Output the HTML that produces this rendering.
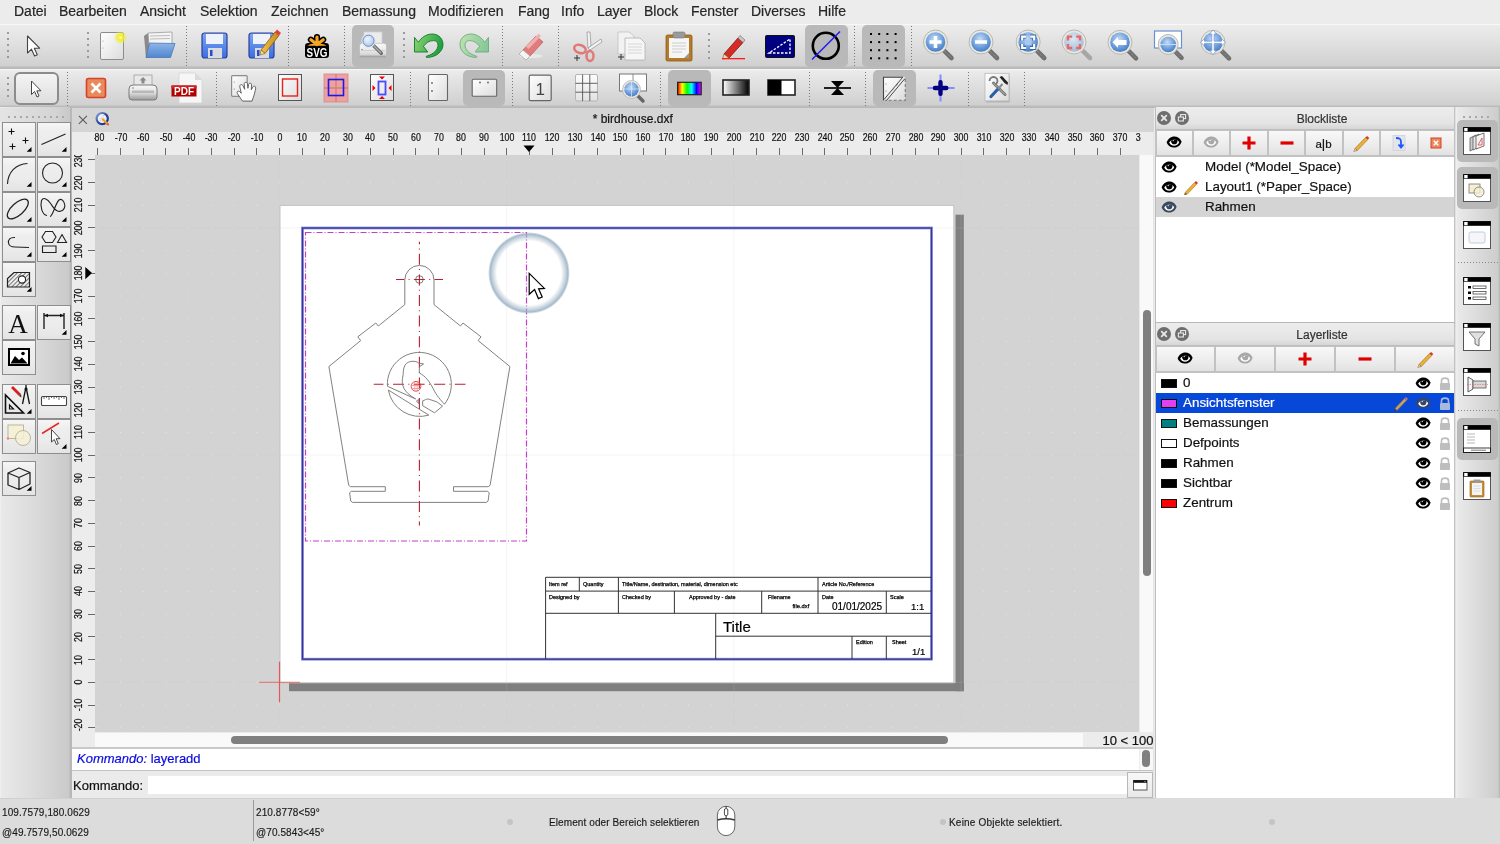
<!DOCTYPE html><html><head><meta charset="utf-8"><style>
*{margin:0;padding:0;box-sizing:border-box}
html,body{width:1500px;height:844px;overflow:hidden;background:#e4e4e4;font-family:"Liberation Sans",sans-serif;color:#000}
.a{position:absolute}
.t{white-space:nowrap;line-height:1;-webkit-text-stroke-width:0.2px}
svg{overflow:visible}
</style></head><body><div id="root" class="a" style="left:0;top:0;width:1500px;height:844px;overflow:hidden;will-change:transform"><div class="a" style="left:0;top:0;width:1500px;height:24px;background:#ececec"></div><div class="a t" style="left:14px;top:4.15px;font-size:14px;color:#262626;">Datei</div><div class="a t" style="left:59px;top:4.15px;font-size:14px;color:#262626;">Bearbeiten</div><div class="a t" style="left:140px;top:4.15px;font-size:14px;color:#262626;">Ansicht</div><div class="a t" style="left:200px;top:4.15px;font-size:14px;color:#262626;">Selektion</div><div class="a t" style="left:271px;top:4.15px;font-size:14px;color:#262626;">Zeichnen</div><div class="a t" style="left:342px;top:4.15px;font-size:14px;color:#262626;">Bemassung</div><div class="a t" style="left:428px;top:4.15px;font-size:14px;color:#262626;">Modifizieren</div><div class="a t" style="left:518px;top:4.15px;font-size:14px;color:#262626;">Fang</div><div class="a t" style="left:561px;top:4.15px;font-size:14px;color:#262626;">Info</div><div class="a t" style="left:597px;top:4.15px;font-size:14px;color:#262626;">Layer</div><div class="a t" style="left:644px;top:4.15px;font-size:14px;color:#262626;">Block</div><div class="a t" style="left:691px;top:4.15px;font-size:14px;color:#262626;">Fenster</div><div class="a t" style="left:751px;top:4.15px;font-size:14px;color:#262626;">Diverses</div><div class="a t" style="left:818px;top:4.15px;font-size:14px;color:#262626;">Hilfe</div><div class="a" style="left:0;top:24px;width:1500px;height:45px;background:linear-gradient(#f8f8f8 0,#f8f8f8 1px,#ececec 1px,#e4e4e4 14px,#d0d0d0 42px,#bcbcbc 43px,#b8b8b8 45px)"></div><div class="a" style="left:0;top:69px;width:1500px;height:39px;background:linear-gradient(#f8f8f8 0,#f8f8f8 1px,#ececec 1px,#e4e4e4 10px,#d0d0d0 36px,#bcbcbc 37px,#b8b8b8 39px)"></div><svg width="0" height="0" style="position:absolute"><defs>
<radialGradient id="lensB" cx="0.45" cy="0.35" r="0.7"><stop offset="0" stop-color="#c6dcf5"/><stop offset="0.6" stop-color="#6d9fdc"/><stop offset="1" stop-color="#3f74c0"/></radialGradient>
<radialGradient id="lensG" cx="0.45" cy="0.35" r="0.7"><stop offset="0" stop-color="#dde8f3"/><stop offset="1" stop-color="#9fb8d6"/></radialGradient>
<linearGradient id="pageG" x1="0" y1="0" x2="1" y2="1"><stop offset="0" stop-color="#ffffff"/><stop offset="1" stop-color="#dcdcdc"/></linearGradient>
<linearGradient id="floppy" x1="0" y1="0" x2="0" y2="1"><stop offset="0" stop-color="#7fa6f0"/><stop offset="1" stop-color="#3a6ee0"/></linearGradient>
<linearGradient id="folder" x1="0" y1="0" x2="0" y2="1"><stop offset="0" stop-color="#8fb5e8"/><stop offset="1" stop-color="#4f86cf"/></linearGradient>
<linearGradient id="btnG" x1="0" y1="0" x2="0" y2="1"><stop offset="0" stop-color="#fdfdfd"/><stop offset="1" stop-color="#e2e2e2"/></linearGradient>
<linearGradient id="rainbow" x1="0" y1="0" x2="1" y2="0"><stop offset="0" stop-color="#ff0000"/><stop offset="0.2" stop-color="#ffff00"/><stop offset="0.4" stop-color="#00ff00"/><stop offset="0.6" stop-color="#00ffff"/><stop offset="0.8" stop-color="#0000ff"/><stop offset="1" stop-color="#ff00ff"/></linearGradient>
<linearGradient id="gradBW" x1="0" y1="0" x2="1" y2="0"><stop offset="0" stop-color="#ffffff"/><stop offset="1" stop-color="#000000"/></linearGradient>
<linearGradient id="pencilG" x1="0" y1="0" x2="1" y2="0"><stop offset="0" stop-color="#f5c04a"/><stop offset="1" stop-color="#c88a1c"/></linearGradient>
</defs></svg><div class="a" style="left:7px;top:32px;width:2px;height:2px;background:#9a9a9a"></div><div class="a" style="left:7px;top:38px;width:2px;height:2px;background:#9a9a9a"></div><div class="a" style="left:7px;top:44px;width:2px;height:2px;background:#9a9a9a"></div><div class="a" style="left:7px;top:50px;width:2px;height:2px;background:#9a9a9a"></div><div class="a" style="left:7px;top:56px;width:2px;height:2px;background:#9a9a9a"></div><div class="a" style="left:87px;top:32px;width:2px;height:2px;background:#9a9a9a"></div><div class="a" style="left:87px;top:38px;width:2px;height:2px;background:#9a9a9a"></div><div class="a" style="left:87px;top:44px;width:2px;height:2px;background:#9a9a9a"></div><div class="a" style="left:87px;top:50px;width:2px;height:2px;background:#9a9a9a"></div><div class="a" style="left:87px;top:56px;width:2px;height:2px;background:#9a9a9a"></div><div class="a" style="left:403px;top:32px;width:2px;height:2px;background:#9a9a9a"></div><div class="a" style="left:403px;top:38px;width:2px;height:2px;background:#9a9a9a"></div><div class="a" style="left:403px;top:44px;width:2px;height:2px;background:#9a9a9a"></div><div class="a" style="left:403px;top:50px;width:2px;height:2px;background:#9a9a9a"></div><div class="a" style="left:403px;top:56px;width:2px;height:2px;background:#9a9a9a"></div><div class="a" style="left:708px;top:33px;width:2px;height:2px;background:#9a9a9a"></div><div class="a" style="left:708px;top:39px;width:2px;height:2px;background:#9a9a9a"></div><div class="a" style="left:708px;top:45px;width:2px;height:2px;background:#9a9a9a"></div><div class="a" style="left:708px;top:51px;width:2px;height:2px;background:#9a9a9a"></div><div class="a" style="left:708px;top:57px;width:2px;height:2px;background:#9a9a9a"></div><div class="a" style="left:186px;top:26px;width:1px;height:41px;background:repeating-linear-gradient(180deg,#7a7a7a 0 1px,transparent 1px 3px)"></div><div class="a" style="left:288px;top:26px;width:1px;height:41px;background:repeating-linear-gradient(180deg,#7a7a7a 0 1px,transparent 1px 3px)"></div><div class="a" style="left:344px;top:26px;width:1px;height:41px;background:repeating-linear-gradient(180deg,#7a7a7a 0 1px,transparent 1px 3px)"></div><div class="a" style="left:502px;top:26px;width:1px;height:41px;background:repeating-linear-gradient(180deg,#7a7a7a 0 1px,transparent 1px 3px)"></div><div class="a" style="left:558px;top:26px;width:1px;height:41px;background:repeating-linear-gradient(180deg,#7a7a7a 0 1px,transparent 1px 3px)"></div><div class="a" style="left:854px;top:26px;width:1px;height:41px;background:repeating-linear-gradient(180deg,#7a7a7a 0 1px,transparent 1px 3px)"></div><div class="a" style="left:911px;top:26px;width:1px;height:41px;background:repeating-linear-gradient(180deg,#7a7a7a 0 1px,transparent 1px 3px)"></div><svg class="a" style="left:26px;top:35px" width="16" height="24" viewBox="0 0 16 24" ><path d="M1.5,1 L1.5,18 L5.5,14.2 L8.6,21 L11.3,19.8 L8.3,13.2 L13.6,13.2 Z" fill="#fff" stroke="#444" stroke-width="1.1" stroke-linejoin="round"/></svg><svg class="a" style="left:98px;top:30px" width="30" height="32" viewBox="0 0 30 32" ><defs><radialGradient id="glow"><stop offset="0" stop-color="#ffffc0"/><stop offset="0.35" stop-color="#f4f020"/><stop offset="0.7" stop-color="#f0ec40" stop-opacity="0.5"/><stop offset="1" stop-color="#f0f060" stop-opacity="0"/></radialGradient></defs><rect x="2.5" y="2.5" width="23" height="27" rx="1.5" fill="url(#pageG)" stroke="#8c8c8c" stroke-width="1"/><circle cx="5" cy="11" r="0.6" fill="#999"/><circle cx="5" cy="18" r="0.6" fill="#999"/><circle cx="22.5" cy="7.5" r="7" fill="url(#glow)"/></svg><svg class="a" style="left:142px;top:30px" width="36" height="32" viewBox="0 0 36 32" ><path d="M2,6 L6,3 L15,3 L15,26 L4,28 Z" fill="#8a8a8a"/><path d="M6,3 L30,2 L30,20 L8,26 Z" fill="#f4f4f4" stroke="#9a9a9a" stroke-width="0.8"/><path d="M8,6 L28,5.5 M8,9 L28,8.5" stroke="#bbb" stroke-width="1"/><path d="M4,27.5 L7.5,13 L33,13.5 L28.5,27.5 Z" fill="url(#folder)" stroke="#4a78b8" stroke-width="0.8"/></svg><svg class="a" style="left:201px;top:32px" width="27" height="27" viewBox="0 0 27 27" ><rect x="1" y="1" width="25" height="25" rx="2.5" fill="url(#floppy)" stroke="#2c3f9c" stroke-width="1.2"/><rect x="5" y="2" width="17" height="10" fill="#eef3fb"/><rect x="7" y="16" width="14" height="10" fill="#d8dbe0"/><rect x="9" y="18" width="2.5" height="6" fill="#2c4cc0"/></svg><svg class="a" style="left:248px;top:32px" width="27" height="27" viewBox="0 0 27 27" ><rect x="1" y="1" width="25" height="25" rx="2.5" fill="url(#floppy)" stroke="#2c3f9c" stroke-width="1.2"/><rect x="5" y="2" width="17" height="10" fill="#eef3fb"/><rect x="7" y="16" width="14" height="10" fill="#d8dbe0"/><rect x="9" y="18" width="2.5" height="6" fill="#2c4cc0"/></svg><svg class="a" style="left:258px;top:26px" width="22" height="30" viewBox="0 0 22 30" ><path d="M3,24 L17,6 L21,9.5 L7,27.5 Z" fill="url(#pencilG)" stroke="#8a5a10" stroke-width="0.8"/><path d="M17,6 L19,3.5 L23,7 L21,9.5 Z" fill="#e0403a"/><path d="M3,24 L2,29 L7,27.5 Z" fill="#f2d9a8" stroke="#8a5a10" stroke-width="0.6"/></svg><svg class="a" style="left:304px;top:32px" width="28" height="28" viewBox="0 0 28 28" ><path d="M13,12.5 L6.9,7.7 M13,12.5 L13,5.1 M13,12.5 L19.2,7.7" stroke="#000" stroke-width="6.2" stroke-linecap="round"/><rect x="1" y="11" width="24" height="15" rx="3.2" fill="#000"/><path d="M13,12.5 L6.9,7.7 M13,12.5 L13,5.1 M13,12.5 L19.2,7.7" stroke="#f5a623" stroke-width="3.2" stroke-linecap="round"/><path d="M3.5,13.8 Q6,11.2 13,12 Q20,11.2 22.5,13.8 Z" fill="#f5a623"/><text x="0" y="0" font-family="Liberation Sans" font-weight="bold" font-size="11.5" fill="#fff" text-anchor="middle" transform="translate(13,25) scale(0.86,1.12)">SVG</text></svg><div class="a" style="left:352px;top:25px;width:42px;height:42px;background:#b9b9b9;border-radius:5px"></div><svg class="a" style="left:352px;top:25px" width="43" height="42" viewBox="0 0 43 42" ><defs><linearGradient id="pbody" x1="0" y1="0" x2="0" y2="1"><stop offset="0" stop-color="#fbfbfb"/><stop offset="0.55" stop-color="#e6e6e6"/><stop offset="0.8" stop-color="#d6d6d6"/><stop offset="1" stop-color="#8a8a8a"/></linearGradient><radialGradient id="plens" cx="0.4" cy="0.35" r="0.75"><stop offset="0" stop-color="#eef4fb"/><stop offset="1" stop-color="#a9c4e4"/></radialGradient></defs><rect x="12" y="7" width="18" height="13" fill="#ececec" stroke="#cfcfcf" stroke-width="0.8"/><path d="M7.5,21 Q7.5,18.3 10.5,18.3 L31.5,18.3 Q34.5,18.3 34.5,21 L34.5,30.5 Q34.5,32.5 32.5,32.5 L9.5,32.5 Q7.5,32.5 7.5,30.5 Z" fill="url(#pbody)" stroke="#b8b8b8" stroke-width="0.7"/><path d="M9,25.5 L33,25.5" stroke="#c8c8c8" stroke-width="0.8"/><circle cx="10" cy="24.5" r="0.6" fill="#555"/><line x1="21.5" y1="20.5" x2="29.3" y2="28.3" stroke="#6a6a6a" stroke-width="3.4" stroke-linecap="round"/><line x1="21.5" y1="20.5" x2="29" y2="28" stroke="#b0b0b0" stroke-width="1.2"/><circle cx="16.5" cy="15.7" r="6.9" fill="#f4f4f4" stroke="#d8d8d8" stroke-width="0.5"/><circle cx="16.5" cy="15.7" r="5.6" fill="url(#plens)" stroke="#4a80d0" stroke-width="0.9"/></svg><svg class="a" style="left:412px;top:32px" width="34" height="28" viewBox="0 0 34 28" ><defs><linearGradient id="ugr" x1="0" y1="0" x2="1" y2="0.3"><stop offset="0" stop-color="#90d470"/><stop offset="1" stop-color="#22a040"/></linearGradient><linearGradient id="rgr" x1="1" y1="0" x2="0" y2="0.3"><stop offset="0" stop-color="#c0e4b0"/><stop offset="1" stop-color="#88c898"/></linearGradient></defs><path d="M2.5,5.4 L6.3,10.2 C9,6 14,2 20,2 C27,2 31,7 31,12.5 C31,19 25,25 15.2,25.5 C13.5,25.6 13.6,24.2 15.5,23.8 C22,22 26,17.5 26,13 C26,10 24,8.6 21.5,8.6 C17,8.6 14,11 11.4,14.3 L15.8,20 L2.5,20 Z" fill="url(#ugr)" stroke="#0e7a2e" stroke-width="0.9" stroke-linejoin="round"/></svg><svg class="a" style="left:457px;top:32px" width="34" height="28" viewBox="0 0 34 28" ><g transform="translate(34,0) scale(-1,1)"><path d="M2.5,5.4 L6.3,10.2 C9,6 14,2 20,2 C27,2 31,7 31,12.5 C31,19 25,25 15.2,25.5 C13.5,25.6 13.6,24.2 15.5,23.8 C22,22 26,17.5 26,13 C26,10 24,8.6 21.5,8.6 C17,8.6 14,11 11.4,14.3 L15.8,20 L2.5,20 Z" fill="url(#rgr)" stroke="#6aaa80" stroke-width="0.9" stroke-linejoin="round"/></g></svg><svg class="a" style="left:516px;top:32px" width="32" height="28" viewBox="0 0 32 28" ><ellipse cx="15" cy="24" rx="12" ry="2" fill="#e8e8e8"/><path d="M7,18 L20,4 L27,10 L14,24 Z" fill="#e07c7c" stroke="#c06060" stroke-width="0.8"/><path d="M10,14.5 L22.5,1.7 L25,4 L12.5,17 Z" fill="#f0b0b0"/><path d="M3,22 L7,18 L14,24 L10,28 Z" fill="#f5f5f5" stroke="#aaa" stroke-width="0.8"/></svg><svg class="a" style="left:571px;top:30px" width="34" height="32" viewBox="0 0 34 32" ><path d="M17,18 L16,2 L19,2 L20,16 Z" fill="#f4f4f4" stroke="#999" stroke-width="0.8"/><path d="M17,18 L30,9 L31,12 L19,20 Z" fill="#f4f4f4" stroke="#999" stroke-width="0.8"/><ellipse cx="9" cy="19" rx="6" ry="4" fill="none" stroke="#e07a7a" stroke-width="2.5" transform="rotate(20 9 19)"/><ellipse cx="19" cy="26" rx="3.5" ry="5" fill="none" stroke="#e07a7a" stroke-width="2.5"/><path d="M3,28 L9,28 M6,25 L6,31" stroke="#333" stroke-width="1"/></svg><svg class="a" style="left:615px;top:30px" width="36" height="32" viewBox="0 0 36 32" ><path d="M3,2 L14,2 L19,6 L19,24 L3,24 Z" fill="#f2f2f2" stroke="#c0c0c0" stroke-width="0.8"/><path d="M10,8 L25,8 L30,13 L30,30 L10,30 Z" fill="#f6f6f6" stroke="#b0b0b0" stroke-width="0.8"/><path d="M13,14 L27,14 M13,17 L27,17 M13,20 L27,20 M13,23 L27,23" stroke="#cfcfcf" stroke-width="0.8"/><path d="M3,27 L9,27 M6,24 L6,30" stroke="#333" stroke-width="1"/></svg><svg class="a" style="left:663px;top:30px" width="32" height="32" viewBox="0 0 32 32" ><rect x="3" y="5" width="26" height="26" rx="1.5" fill="#b57a2a" stroke="#8a5a18" stroke-width="0.8"/><rect x="6" y="8" width="20" height="20" fill="#f6f6f6"/><path d="M9,13 L23,13 M9,16 L23,16 M9,19 L23,19 M9,22 L19,22" stroke="#c8c8c8" stroke-width="0.9"/><path d="M21,28 L26,23 L26,28 Z" fill="#999"/><rect x="10" y="2" width="12" height="6" rx="1.5" fill="#9a9a9a" stroke="#777" stroke-width="0.6"/></svg><svg class="a" style="left:720px;top:32px" width="28" height="28" viewBox="0 0 28 28" ><path d="M4,22 L18,6 L23,10.5 L9,26 Z" fill="#d82a24" stroke="#7a1a10" stroke-width="0.8"/><path d="M18,6 L20,3.5 L25,8 L23,10.5 Z" fill="#c8c8c8" stroke="#666" stroke-width="0.6"/><path d="M4,22 L2.5,27 L9,26 Z" fill="#f2d9a8" stroke="#7a5010" stroke-width="0.6"/><rect x="2" y="26" width="23" height="1.3" fill="#ff1a1a"/></svg><svg class="a" style="left:765px;top:35px" width="30" height="23" viewBox="0 0 30 23" ><rect x="0.5" y="0.5" width="29" height="22" rx="1" fill="#000080" stroke="#111" stroke-width="1"/><path d="M4,18 L25,18 L25,4 Z" fill="none" stroke="#fff" stroke-width="1.3" stroke-dasharray="2.5,1.5"/></svg><div class="a" style="left:805px;top:25px;width:43px;height:42px;background:#b9b9b9;border-radius:5px"></div><svg class="a" style="left:810px;top:30px" width="32" height="32" viewBox="0 0 32 32" ><circle cx="15.8" cy="15.8" r="13" fill="none" stroke="#000" stroke-width="2.6"/><line x1="2" y1="29.5" x2="30" y2="1.5" stroke="#1a1aff" stroke-width="1.4"/></svg><div class="a" style="left:862px;top:25px;width:43px;height:42px;background:#b9b9b9;border-radius:5px"></div><svg class="a" style="left:870px;top:33px" width="30" height="30" viewBox="0 0 30 30" ><rect x="0.0" y="0.0" width="2" height="2" fill="#000"/><rect x="0.0" y="8.1" width="2" height="2" fill="#000"/><rect x="0.0" y="16.2" width="2" height="2" fill="#000"/><rect x="0.0" y="24.3" width="2" height="2" fill="#000"/><rect x="8.2" y="0.0" width="2" height="2" fill="#000"/><rect x="8.2" y="8.1" width="2" height="2" fill="#000"/><rect x="8.2" y="16.2" width="2" height="2" fill="#000"/><rect x="8.2" y="24.3" width="2" height="2" fill="#000"/><rect x="16.4" y="0.0" width="2" height="2" fill="#000"/><rect x="16.4" y="8.1" width="2" height="2" fill="#000"/><rect x="16.4" y="16.2" width="2" height="2" fill="#000"/><rect x="16.4" y="24.3" width="2" height="2" fill="#000"/><rect x="24.6" y="0.0" width="2" height="2" fill="#000"/><rect x="24.6" y="8.1" width="2" height="2" fill="#000"/><rect x="24.6" y="16.2" width="2" height="2" fill="#000"/><rect x="24.6" y="24.3" width="2" height="2" fill="#000"/></svg><svg class="a" style="left:918px;top:28px" width="44" height="36" viewBox="0 0 44 36" ><line x1="26.1" y1="22.6" x2="33.5" y2="30.0" stroke="#707070" stroke-width="4.6" stroke-linecap="round"/><line x1="26.5" y1="23.0" x2="33.1" y2="29.6" stroke="#9a9a9a" stroke-width="1" stroke-dasharray="1,1"/><circle cx="17.5" cy="14" r="12" fill="#e8e8e0" stroke="#b8b8b0" stroke-width="1"/><circle cx="17.5" cy="14" r="9.8" fill="url(#lensB)"/><path d="M17.5,8 L17.5,20 M11.5,14 L23.5,14" stroke="#fff" stroke-width="3.5"/></svg><svg class="a" style="left:963px;top:28px" width="44" height="36" viewBox="0 0 44 36" ><line x1="26.6" y1="22.6" x2="34.0" y2="30.0" stroke="#707070" stroke-width="4.6" stroke-linecap="round"/><line x1="27.0" y1="23.0" x2="33.6" y2="29.6" stroke="#9a9a9a" stroke-width="1" stroke-dasharray="1,1"/><circle cx="18" cy="14" r="12" fill="#e8e8e0" stroke="#b8b8b0" stroke-width="1"/><circle cx="18" cy="14" r="9.8" fill="url(#lensB)"/><path d="M12,14 L24,14" stroke="#fff" stroke-width="3.5"/></svg><svg class="a" style="left:1010px;top:28px" width="44" height="36" viewBox="0 0 44 36" ><line x1="26.8" y1="22.6" x2="34.2" y2="30.0" stroke="#707070" stroke-width="4.6" stroke-linecap="round"/><line x1="27.2" y1="23.0" x2="33.8" y2="29.6" stroke="#9a9a9a" stroke-width="1" stroke-dasharray="1,1"/><circle cx="18.2" cy="14" r="12" fill="#e8e8e0" stroke="#b8b8b0" stroke-width="1"/><circle cx="18.2" cy="14" r="9.8" fill="url(#lensB)"/><rect x="15" y="11.5" width="6.5" height="5.5" fill="#a8c8ee"/><path d="M12.2,12.6 L12.2,8.6 L16.2,8.6 M20.2,8.6 L24.2,8.6 L24.2,12.6 M24.2,16 L24.2,20 L20.2,20 M16.2,20 L12.2,20 L12.2,16" fill="none" stroke="#3566b0" stroke-width="4"/><path d="M12.2,12.6 L12.2,8.6 L16.2,8.6 M20.2,8.6 L24.2,8.6 L24.2,12.6 M24.2,16 L24.2,20 L20.2,20 M16.2,20 L12.2,20 L12.2,16" fill="none" stroke="#fff" stroke-width="2.2"/></svg><svg class="a" style="left:1056px;top:28px" width="44" height="36" viewBox="0 0 44 36" ><line x1="26.6" y1="22.6" x2="34.0" y2="30.0" stroke="#a8a8a8" stroke-width="4.6" stroke-linecap="round"/><line x1="27.0" y1="23.0" x2="33.6" y2="29.6" stroke="#9a9a9a" stroke-width="1" stroke-dasharray="1,1"/><circle cx="18" cy="14" r="12" fill="#e8e8e0" stroke="#b8b8b0" stroke-width="1"/><circle cx="18" cy="14" r="9.8" fill="url(#lensG)"/><path d="M12,12.6 L12,8.6 L16.2,8.6 M20.2,8.6 L24,8.6 L24,12.6 M24,16 L24,20 L20.2,20 M16.2,20 L12,20 L12,16" fill="none" stroke="#e86868" stroke-width="2.4"/></svg><svg class="a" style="left:1102px;top:28px" width="44" height="36" viewBox="0 0 44 36" ><line x1="26.6" y1="22.9" x2="34.0" y2="30.3" stroke="#707070" stroke-width="4.6" stroke-linecap="round"/><line x1="27.0" y1="23.3" x2="33.6" y2="29.9" stroke="#9a9a9a" stroke-width="1" stroke-dasharray="1,1"/><circle cx="18" cy="14.3" r="12" fill="#e8e8e0" stroke="#b8b8b0" stroke-width="1"/><circle cx="18" cy="14.3" r="9.8" fill="url(#lensB)"/><path d="M10.5,14.3 L16,9 L16,12 L24.5,12 L24.5,17 L16,17 L16,19.8 Z" fill="#fff"/></svg><svg class="a" style="left:1150px;top:28px" width="44" height="36" viewBox="0 0 44 36" ><rect x="4.5" y="3" width="27" height="17" fill="#fff" stroke="#6a90d0" stroke-width="1.2"/><line x1="25.4" y1="23.7" x2="31.5" y2="29.8" stroke="#707070" stroke-width="4.6" stroke-linecap="round"/><line x1="25.7" y1="24.0" x2="31.2" y2="29.5" stroke="#9a9a9a" stroke-width="1" stroke-dasharray="1,1"/><circle cx="18.2" cy="16.5" r="10" fill="#e8e8e0" stroke="#b8b8b0" stroke-width="1"/><circle cx="18.2" cy="16.5" r="7.8" fill="url(#lensB)"/><rect x="10" y="16" width="16" height="1" fill="#c8dcf4"/></svg><svg class="a" style="left:1196px;top:26px" width="44" height="38" viewBox="0 0 44 38" ><line x1="25.6" y1="24.9" x2="33.0" y2="32.3" stroke="#707070" stroke-width="4.6" stroke-linecap="round"/><line x1="26.0" y1="25.3" x2="32.6" y2="31.9" stroke="#9a9a9a" stroke-width="1" stroke-dasharray="1,1"/><circle cx="17" cy="16.3" r="12" fill="#e8e8e0" stroke="#b8b8b0" stroke-width="1"/><circle cx="17" cy="16.3" r="9.8" fill="url(#lensB)"/><path d="M17,4 L13.5,8 L15.8,8 L15.8,15.2 L8.5,15.2 L8.5,12.8 L4.5,16.3 L8.5,19.8 L8.5,17.4 L15.8,17.4 L15.8,24.6 L13.5,24.6 L17,28.6 L20.5,24.6 L18.2,24.6 L18.2,17.4 L25.5,17.4 L25.5,19.8 L29.5,16.3 L25.5,12.8 L25.5,15.2 L18.2,15.2 L18.2,8 L20.5,8 Z" fill="#fff" stroke="#6a90d0" stroke-width="0.7"/></svg><div class="a" style="left:7px;top:77px;width:2px;height:2px;background:#9a9a9a"></div><div class="a" style="left:7px;top:83px;width:2px;height:2px;background:#9a9a9a"></div><div class="a" style="left:7px;top:89px;width:2px;height:2px;background:#9a9a9a"></div><div class="a" style="left:7px;top:95px;width:2px;height:2px;background:#9a9a9a"></div><div class="a" style="left:67px;top:72px;width:1px;height:34px;background:repeating-linear-gradient(180deg,#7a7a7a 0 1px,transparent 1px 3px)"></div><div class="a" style="left:216px;top:72px;width:1px;height:34px;background:repeating-linear-gradient(180deg,#7a7a7a 0 1px,transparent 1px 3px)"></div><div class="a" style="left:410px;top:72px;width:1px;height:34px;background:repeating-linear-gradient(180deg,#7a7a7a 0 1px,transparent 1px 3px)"></div><div class="a" style="left:512px;top:72px;width:1px;height:34px;background:repeating-linear-gradient(180deg,#7a7a7a 0 1px,transparent 1px 3px)"></div><div class="a" style="left:660px;top:72px;width:1px;height:34px;background:repeating-linear-gradient(180deg,#7a7a7a 0 1px,transparent 1px 3px)"></div><div class="a" style="left:809px;top:72px;width:1px;height:34px;background:repeating-linear-gradient(180deg,#7a7a7a 0 1px,transparent 1px 3px)"></div><div class="a" style="left:865px;top:72px;width:1px;height:34px;background:repeating-linear-gradient(180deg,#7a7a7a 0 1px,transparent 1px 3px)"></div><div class="a" style="left:968px;top:72px;width:1px;height:34px;background:repeating-linear-gradient(180deg,#7a7a7a 0 1px,transparent 1px 3px)"></div><div class="a" style="left:1024px;top:72px;width:1px;height:34px;background:repeating-linear-gradient(180deg,#7a7a7a 0 1px,transparent 1px 3px)"></div><div class="a" style="left:14px;top:72px;width:45px;height:33px;border:2px solid #8c8c8c;border-radius:6px;background:linear-gradient(#f4f4f4,#dedede)"></div><svg class="a" style="left:30px;top:80px" width="14" height="20" viewBox="0 0 14 20" ><path d="M1.5,1 L1.5,14.5 L4.6,11.5 L7,17 L9,16 L6.8,10.8 L11,10.8 Z" fill="#fff" stroke="#444" stroke-width="1" stroke-linejoin="round"/></svg><svg class="a" style="left:85px;top:77px" width="22" height="22" viewBox="0 0 22 22" ><rect x="1.5" y="1.5" width="19" height="19" rx="2" fill="#e88a5c" stroke="#d8402a" stroke-width="1.6"/><path d="M6.5,6.5 L15.5,15.5 M15.5,6.5 L6.5,15.5" stroke="#fff" stroke-width="2.6"/></svg><svg class="a" style="left:128px;top:74px" width="30" height="28" viewBox="0 0 30 28" ><defs><linearGradient id="prn" x1="0" y1="0" x2="0" y2="1"><stop offset="0" stop-color="#fafafa"/><stop offset="0.5" stop-color="#e0e0e0"/><stop offset="1" stop-color="#9a9a9a"/></linearGradient></defs><rect x="6" y="1" width="18" height="11" fill="#e8e8e8" stroke="#a0a0a0" stroke-width="0.8"/><path d="M15,3 L11.5,6.5 L13.5,6.5 L13.5,9.5 L16.5,9.5 L16.5,6.5 L18.5,6.5 Z" fill="#8a8a8a"/><path d="M1,15 Q1,11 5,11 L25,11 Q29,11 29,15 L29,23 Q29,26 26,26 L4,26 Q1,26 1,23 Z" fill="url(#prn)" stroke="#7a7a7a" stroke-width="1"/><rect x="4" y="16.5" width="22" height="2.5" fill="#b8b8b8"/><circle cx="5" cy="14" r="0.7" fill="#666"/></svg><svg class="a" style="left:171px;top:72px" width="33" height="32" viewBox="0 0 33 32" ><path d="M8,1 L24,1 L31,8 L31,31 L8,31 Z" fill="#f6f6f6" stroke="#d4d4d4" stroke-width="0.8"/><path d="M24,1 L24,8 L31,8 Z" fill="#dadada"/><rect x="0.5" y="13.5" width="25" height="11" fill="#b00000"/><rect x="0.5" y="13.5" width="25" height="3" fill="#d02020"/><text x="13" y="22.5" font-family="Liberation Sans" font-weight="bold" font-size="10" fill="#fff" text-anchor="middle">PDF</text></svg><svg class="a" style="left:230px;top:74px" width="28" height="28" viewBox="0 0 28 28" ><rect x="1.6" y="1.6" width="15.6" height="20.7" rx="1" fill="url(#pageG)" stroke="#8c8c8c" stroke-width="1.2"/><circle cx="4.3" cy="8" r="0.6" fill="#777"/><circle cx="4.3" cy="15" r="0.6" fill="#777"/><path d="M8,26.8 C6,24 4,21 2.8,19 C2,17.5 3.5,16.3 5,17.2 L6.8,19 L5.3,12.5 C5,10 7.8,9.5 8.5,11.5 L10.2,15 L9.7,9.5 C9.6,7.6 12.6,7.4 13,9.5 L13.4,14 L14.2,10 C14.6,8.2 17.2,8.6 17,10.5 L16.8,15.5 L18.3,12.8 C19,11.2 21.5,11.8 21.2,13.8 C20.8,17 19.5,21 18.8,23 L17.5,26.8 Z" fill="#fff" stroke="#555" stroke-width="0.9" stroke-linejoin="round" transform="translate(4.5,0.3)"/></svg><svg class="a" style="left:277px;top:73px" width="27" height="30" viewBox="0 0 27 30" ><rect x="1.5" y="1.5" width="23" height="26" fill="url(#pageG)" stroke="#555" stroke-width="1"/><rect x="5.5" y="6" width="15" height="17" fill="none" stroke="#e82020" stroke-width="1.4"/></svg><svg class="a" style="left:323px;top:73px" width="27" height="30" viewBox="0 0 27 30" ><rect x="1" y="1" width="24" height="28" fill="#f0a0a0" stroke="#d08888" stroke-width="0.8"/><path d="M13,1 L13,29 M1,15 L25,15" stroke="#d08080" stroke-width="1.3"/><rect x="5.5" y="6.5" width="15" height="16" fill="none" stroke="#1a1ae8" stroke-width="1.6"/></svg><svg class="a" style="left:369px;top:73px" width="27" height="30" viewBox="0 0 27 30" ><rect x="1.5" y="1.5" width="23" height="26" fill="url(#pageG)" stroke="#555" stroke-width="1"/><rect x="9.5" y="8.5" width="7" height="13" fill="none" stroke="#4a4aff" stroke-width="1.8"/><path d="M10,3.5 L16,3.5 L13,6.5 Z M10,26 L16,26 L13,23 Z M3.5,12 L3.5,18 L6.5,15 Z M22.5,12 L22.5,18 L19.5,15 Z" fill="#ee0000"/></svg><svg class="a" style="left:427px;top:73px" width="23" height="30" viewBox="0 0 23 30" ><rect x="1.5" y="1.5" width="19" height="26" rx="1" fill="url(#pageG)" stroke="#666" stroke-width="1.1"/><circle cx="5" cy="10" r="0.9" fill="#666"/><circle cx="5" cy="18" r="0.9" fill="#666"/></svg><div class="a" style="left:463px;top:70px;width:42px;height:36px;background:#b9b9b9;border-radius:5px"></div><svg class="a" style="left:471px;top:78px" width="27" height="20" viewBox="0 0 27 20" ><rect x="1.2" y="1.2" width="24.5" height="17" rx="1" fill="url(#pageG)" stroke="#666" stroke-width="1.1"/><circle cx="9" cy="4.5" r="0.9" fill="#666"/><circle cx="17" cy="4.5" r="0.9" fill="#666"/></svg><svg class="a" style="left:528px;top:74px" width="25" height="28" viewBox="0 0 25 28" ><rect x="1.2" y="1.2" width="22" height="25.5" rx="1.5" fill="url(#pageG)" stroke="#666" stroke-width="1.2"/><text x="12.2" y="21" font-family="Liberation Sans" font-size="17" fill="#444" text-anchor="middle">1</text></svg><svg class="a" style="left:574px;top:73px" width="26" height="30" viewBox="0 0 26 30" ><rect x="1.5" y="1.5" width="22" height="26.5" rx="1.5" fill="url(#btnG)" stroke="#b4b4b4" stroke-width="1"/><path d="M8.6,1.5 L8.6,28 M15.8,1.5 L15.8,28 M1.5,10.3 L23.5,10.3 M1.5,19.2 L23.5,19.2" stroke="#555" stroke-width="0.9"/></svg><svg class="a" style="left:617px;top:73px" width="34" height="32" viewBox="0 0 34 32" ><rect x="2.5" y="1" width="27" height="17" fill="#fff" stroke="#777" stroke-width="1"/><line x1="16" y1="1" x2="16" y2="18" stroke="#777" stroke-width="0.8"/><line x1="20" y1="22" x2="26" y2="28" stroke="#666" stroke-width="3.5" stroke-linecap="round"/><circle cx="14.5" cy="16.5" r="9" fill="#e8e8e0" stroke="#b8b8b0" stroke-width="0.8"/><circle cx="14.5" cy="16.5" r="7.2" fill="url(#lensB)"/><path d="M7,16 L22,16 M14.5,9 L14.5,24" stroke="#dde8f8" stroke-width="0.7"/></svg><div class="a" style="left:668px;top:70px;width:43px;height:36px;background:#b9b9b9;border-radius:5px"></div><svg class="a" style="left:676px;top:81px" width="27" height="15" viewBox="0 0 27 15" ><rect x="1.6" y="1.3" width="23.6" height="12.4" fill="url(#rainbow)" stroke="#222" stroke-width="1.2"/></svg><svg class="a" style="left:722px;top:79px" width="28" height="17" viewBox="0 0 28 17" ><rect x="1" y="1" width="26" height="15" fill="url(#gradBW)" stroke="#222" stroke-width="1.6"/></svg><svg class="a" style="left:767px;top:79px" width="29" height="17" viewBox="0 0 29 17" ><rect x="1" y="1" width="27" height="15" fill="#fff" stroke="#222" stroke-width="1.6"/><rect x="1" y="1" width="13.5" height="15" fill="#000"/></svg><svg class="a" style="left:824px;top:80px" width="28" height="16" viewBox="0 0 28 16" ><rect x="0" y="7" width="27" height="2" fill="#222"/><path d="M7,1 L20,1 L13.5,8 Z M7,15 L20,15 L13.5,8 Z" fill="#000"/></svg><div class="a" style="left:873px;top:70px;width:43px;height:36px;background:#b9b9b9;border-radius:5px"></div><svg class="a" style="left:882px;top:76px" width="25" height="26" viewBox="0 0 25 26" ><rect x="1.5" y="1.2" width="21.8" height="23.2" fill="url(#pageG)"/><path d="M1.5,24.4 L1.5,1.2 L21,1.2" fill="none" stroke="#444" stroke-width="1.1"/><path d="M23.3,3 L23.3,24.4 L3,24.4" fill="none" stroke="#888" stroke-width="1.3" stroke-dasharray="3,2"/><path d="M2,23.5 L20.5,1.5 M4.5,24.5 L23,2.5" stroke="#333" stroke-width="0.9"/><path d="M6,19 L8,17 M10,14.5 L12,12.5 M14,10 L16,8" stroke="#888" stroke-width="0.7"/><circle cx="4" cy="8" r="0.6" fill="#777"/><circle cx="4" cy="15" r="0.6" fill="#777"/></svg><svg class="a" style="left:926px;top:73px" width="30" height="30" viewBox="0 0 30 30" ><path d="M14.5,1.5 L14.5,28.5 M1.5,15 L28.5,15" stroke="#8888ff" stroke-width="2"/><path d="M14.5,9.2 L14.5,20.8 M8.9,15 L20.3,15" stroke="#000080" stroke-width="4.4" stroke-linecap="round"/></svg><svg class="a" style="left:984px;top:72px" width="27" height="32" viewBox="0 0 27 32" ><rect x="1.8" y="2.5" width="24" height="28" fill="#999" opacity="0.5"/><rect x="1" y="1.3" width="24" height="27.6" fill="url(#pageG)" stroke="#b8b8b8" stroke-width="0.8"/><path d="M9.5,11 L21,22.5" stroke="#777" stroke-width="3" stroke-linecap="round"/><path d="M9.5,11 L21,22.5" stroke="#bbb" stroke-width="1"/><path d="M5.5,9 A4,4 0 1 1 11.5,12.5" fill="none" stroke="#777" stroke-width="1.8"/><path d="M7,24.5 L14,17" stroke="#2a5fa8" stroke-width="3.2" stroke-linecap="round"/><path d="M14,17 L18.5,12" stroke="#8a8a8a" stroke-width="2"/><path d="M15.5,5 L18,4 L24,10.5 L23.5,13 L20.5,11 Z" fill="#222"/></svg><div class="a" style="left:0;top:107px;width:72px;height:691px;background:linear-gradient(90deg,#f2f2f2 0,#e9e9e9 1.5px,#dadada 36px,#cacaca 69px,#b8b8b8 70px,#b8b8b8 72px)"></div><div class="a" style="left:0;top:108px;width:70px;height:14px;background:linear-gradient(90deg,#e4e4e4,#d4d4d4 55px,#c8c8c8 70px)"></div><div class="a" style="left:8px;top:116px;width:2px;height:2px;background:#a8a8a8"></div><div class="a" style="left:14px;top:116px;width:2px;height:2px;background:#a8a8a8"></div><div class="a" style="left:20px;top:116px;width:2px;height:2px;background:#a8a8a8"></div><div class="a" style="left:26px;top:116px;width:2px;height:2px;background:#a8a8a8"></div><div class="a" style="left:32px;top:116px;width:2px;height:2px;background:#a8a8a8"></div><div class="a" style="left:38px;top:116px;width:2px;height:2px;background:#a8a8a8"></div><div class="a" style="left:44px;top:116px;width:2px;height:2px;background:#a8a8a8"></div><div class="a" style="left:50px;top:116px;width:2px;height:2px;background:#a8a8a8"></div><div class="a" style="left:56px;top:116px;width:2px;height:2px;background:#a8a8a8"></div><div class="a" style="left:62px;top:116px;width:2px;height:2px;background:#a8a8a8"></div><div class="a" style="left:1.5px;top:122px;width:34.5px;height:34.5px;border:1.3px solid #8e8e8e;background:linear-gradient(#f6f6f6,#eeeeee 25%,#ececec 60%,#e4e4e4)"></div><svg class="a" style="left:2px;top:122px" width="34" height="34" viewBox="0 0 34 34" ><path d="M8,13.5 L14,13.5 M11,10.5 L11,16.5 M22,22.5 L28,22.5 M25,19.5 L25,25.5 M9,28.5 L15,28.5 M12,25.5 L12,31.5" stroke="#111" stroke-width="1.1" transform="translate(-1.5,-4)"/><path d="M29.5,25 L29.5,29.8 L24.7,29.8 Z" fill="#000"/></svg><div class="a" style="left:36.5px;top:122px;width:34.5px;height:34.5px;border:1.3px solid #8e8e8e;background:linear-gradient(#f6f6f6,#eeeeee 25%,#ececec 60%,#e4e4e4)"></div><svg class="a" style="left:37px;top:122px" width="34" height="34" viewBox="0 0 34 34" ><path d="M4.5,22.5 L28.5,12" fill="none" stroke="#222" stroke-width="1.1"/><path d="M29.5,25 L29.5,29.8 L24.7,29.8 Z" fill="#000"/></svg><div class="a" style="left:1.5px;top:157px;width:34.5px;height:34.5px;border:1.3px solid #8e8e8e;background:linear-gradient(#f6f6f6,#eeeeee 25%,#ececec 60%,#e4e4e4)"></div><svg class="a" style="left:2px;top:157px" width="34" height="34" viewBox="0 0 34 34" ><path d="M5.5,27 C6,15 14,7 25.5,6.5" fill="none" stroke="#222" stroke-width="1.1"/><path d="M29.5,25 L29.5,29.8 L24.7,29.8 Z" fill="#000"/></svg><div class="a" style="left:36.5px;top:157px;width:34.5px;height:34.5px;border:1.3px solid #8e8e8e;background:linear-gradient(#f6f6f6,#eeeeee 25%,#ececec 60%,#e4e4e4)"></div><svg class="a" style="left:37px;top:157px" width="34" height="34" viewBox="0 0 34 34" ><circle cx="15.5" cy="16" r="10" fill="none" stroke="#222" stroke-width="1.1"/><path d="M29.5,25 L29.5,29.8 L24.7,29.8 Z" fill="#000"/></svg><div class="a" style="left:1.5px;top:192px;width:34.5px;height:34.5px;border:1.3px solid #8e8e8e;background:linear-gradient(#f6f6f6,#eeeeee 25%,#ececec 60%,#e4e4e4)"></div><svg class="a" style="left:2px;top:192px" width="34" height="34" viewBox="0 0 34 34" ><ellipse cx="15.8" cy="17" rx="13" ry="6" transform="rotate(-42 15.8 17)" fill="none" stroke="#222" stroke-width="1.3"/><path d="M29.5,25 L29.5,29.8 L24.7,29.8 Z" fill="#000"/></svg><div class="a" style="left:36.5px;top:192px;width:34.5px;height:34.5px;border:1.3px solid #8e8e8e;background:linear-gradient(#f6f6f6,#eeeeee 25%,#ececec 60%,#e4e4e4)"></div><svg class="a" style="left:37px;top:192px" width="34" height="34" viewBox="0 0 34 34" ><path d="M10,23.5 C5,23 3,14 4.5,8.5 C6,5 10,6 14,12 C18,19 22,21 26,18 C30,14 26,5 22,8 C18,12 16,24 13,24.5" fill="none" stroke="#222" stroke-width="1.1"/><path d="M29.5,25 L29.5,29.8 L24.7,29.8 Z" fill="#000"/></svg><div class="a" style="left:1.5px;top:227px;width:34.5px;height:34.5px;border:1.3px solid #8e8e8e;background:linear-gradient(#f6f6f6,#eeeeee 25%,#ececec 60%,#e4e4e4)"></div><svg class="a" style="left:2px;top:227px" width="34" height="34" viewBox="0 0 34 34" ><path d="M13,10.5 C8,10 6,13 6.5,16 C7,19 10,20 13,20 L27,20.5" fill="none" stroke="#222" stroke-width="1.1"/><path d="M29.5,25 L29.5,29.8 L24.7,29.8 Z" fill="#000"/></svg><div class="a" style="left:36.5px;top:227px;width:34.5px;height:34.5px;border:1.3px solid #8e8e8e;background:linear-gradient(#f6f6f6,#eeeeee 25%,#ececec 60%,#e4e4e4)"></div><svg class="a" style="left:37px;top:227px" width="34" height="34" viewBox="0 0 34 34" ><path d="M5,10 L8.5,4.5 L15.5,4.5 L19,10 L15.5,15.5 L8.5,15.5 Z M20.5,15.5 L25,7.5 L29.5,15.5 Z M5.5,19 L19,19 L19,25.5 L5.5,25.5 Z" fill="none" stroke="#222" stroke-width="1.1"/><path d="M29.5,25 L29.5,29.8 L24.7,29.8 Z" fill="#000"/></svg><div class="a" style="left:1.5px;top:262px;width:34.5px;height:34.5px;border:1.3px solid #8e8e8e;background:linear-gradient(#f6f6f6,#eeeeee 25%,#ececec 60%,#e4e4e4)"></div><svg class="a" style="left:2px;top:262px" width="34" height="34" viewBox="0 0 34 34" ><defs><pattern id="hatch" width="3" height="3" patternUnits="userSpaceOnUse" patternTransform="rotate(45)"><rect width="1" height="3" fill="#777"/></pattern></defs><path d="M5.5,25 L5.5,16.5 L12,10.5 L27.5,10.5 L27.5,25 Z" fill="url(#hatch)" stroke="#222" stroke-width="1.2"/><circle cx="20" cy="17.5" r="3.6" fill="#fff" stroke="#222" stroke-width="1.1"/><path d="M29.5,25 L29.5,29.8 L24.7,29.8 Z" fill="#000"/></svg><div class="a" style="left:1.5px;top:305px;width:34.5px;height:34.5px;border:1.3px solid #8e8e8e;background:linear-gradient(#f6f6f6,#eeeeee 25%,#ececec 60%,#e4e4e4)"></div><svg class="a" style="left:2px;top:305px" width="34" height="34" viewBox="0 0 34 34" ><text x="16" y="28" font-family="Liberation Serif" font-size="27" fill="#111" text-anchor="middle">A</text></svg><div class="a" style="left:36.5px;top:305px;width:34.5px;height:34.5px;border:1.3px solid #8e8e8e;background:linear-gradient(#f6f6f6,#eeeeee 25%,#ececec 60%,#e4e4e4)"></div><svg class="a" style="left:37px;top:305px" width="34" height="34" viewBox="0 0 34 34" ><path d="M7,8 L7,24 M27,8 L27,24 M7,10.5 L27,10.5" fill="none" stroke="#222" stroke-width="1.4"/><path d="M7,10.5 L11,8.7 L11,12.3 Z M27,10.5 L23,8.7 L23,12.3 Z" fill="#111"/><path d="M29.5,25 L29.5,29.8 L24.7,29.8 Z" fill="#000"/></svg><div class="a" style="left:1.5px;top:340px;width:34.5px;height:34.5px;border:1.3px solid #8e8e8e;background:linear-gradient(#f6f6f6,#eeeeee 25%,#ececec 60%,#e4e4e4)"></div><svg class="a" style="left:2px;top:340px" width="34" height="34" viewBox="0 0 34 34" ><rect x="6" y="8" width="22" height="18" fill="#000"/><rect x="8" y="10" width="18" height="14" fill="#fff"/><path d="M8.5,23.5 L13,16 L17,20 L20,17.5 L25.5,23.5 Z" fill="#000"/><circle cx="21" cy="13.5" r="1.8" fill="#000"/></svg><div class="a" style="left:1.5px;top:384px;width:34.5px;height:34.5px;border:1.3px solid #8e8e8e;background:linear-gradient(#f6f6f6,#eeeeee 25%,#ececec 60%,#e4e4e4)"></div><svg class="a" style="left:2px;top:384px" width="34" height="34" viewBox="0 0 34 34" ><path d="M3.5,29 L3.5,11 L21.5,29 Z" fill="none" stroke="#111" stroke-width="1.6"/><path d="M7.5,25 L7.5,21 L11.5,25 Z" fill="none" stroke="#111" stroke-width="1.2"/><path d="M9,4 L17,12 L19,10 L11,2 Z" fill="#d82020"/><path d="M17,12 L19.5,13.5 L19,10 Z" fill="#333"/><path d="M24,3 L20.5,20 M24,3 L27.5,20 M24,3 L24,1" stroke="#111" stroke-width="1.3" fill="none"/><circle cx="24" cy="5" r="1.5" fill="#111"/><path d="M29.5,25 L29.5,29.8 L24.7,29.8 Z" fill="#000"/></svg><div class="a" style="left:36.5px;top:384px;width:34.5px;height:34.5px;border:1.3px solid #8e8e8e;background:linear-gradient(#f6f6f6,#eeeeee 25%,#ececec 60%,#e4e4e4)"></div><svg class="a" style="left:37px;top:384px" width="34" height="34" viewBox="0 0 34 34" ><rect x="4.5" y="12.5" width="25" height="9" rx="1" fill="#fff" stroke="#444" stroke-width="1.1"/><path d="M7,12.5 L7,15 M9.5,12.5 L9.5,14 M12,12.5 L12,16 M14.5,12.5 L14.5,14 M17,12.5 L17,15 M19.5,12.5 L19.5,14 M22,12.5 L22,16 M24.5,12.5 L24.5,14 M27,12.5 L27,15" stroke="#444" stroke-width="0.8"/></svg><div class="a" style="left:1.5px;top:419px;width:34.5px;height:34.5px;border:1.3px solid #8e8e8e;background:linear-gradient(#f6f6f6,#eeeeee 25%,#ececec 60%,#e4e4e4)"></div><svg class="a" style="left:2px;top:419px" width="34" height="34" viewBox="0 0 34 34" ><rect x="6" y="6" width="15.5" height="13.5" fill="#f5f0d8" stroke="#b8b090" stroke-width="0.9"/><circle cx="21" cy="19" r="7.5" fill="#f5f0d8" fill-opacity="0.85" stroke="#b8b090" stroke-width="0.9"/><circle cx="6" cy="19.5" r="1.2" fill="#f08080"/></svg><div class="a" style="left:36.5px;top:419px;width:34.5px;height:34.5px;border:1.3px solid #8e8e8e;background:linear-gradient(#f6f6f6,#eeeeee 25%,#ececec 60%,#e4e4e4)"></div><svg class="a" style="left:37px;top:419px" width="34" height="34" viewBox="0 0 34 34" ><path d="M5,14.5 L22,4" stroke="#e82828" stroke-width="1.5"/><path d="M14.5,10.5 L14.5,23 L17.3,20.5 L19.4,25.5 L21.3,24.6 L19.2,19.7 L23,19.7 Z" fill="#fff" stroke="#333" stroke-width="0.9" stroke-linejoin="round"/><path d="M29.5,25 L29.5,29.8 L24.7,29.8 Z" fill="#000"/></svg><div class="a" style="left:1.5px;top:461px;width:34.5px;height:34.5px;border:1.3px solid #8e8e8e;background:linear-gradient(#f6f6f6,#eeeeee 25%,#ececec 60%,#e4e4e4)"></div><svg class="a" style="left:2px;top:461px" width="34" height="34" viewBox="0 0 34 34" ><path d="M6,12 L17,7 L28,11.5 L28,23 L17,28.5 L6,24 Z M6,12 L17,16.5 L28,11.5 M17,16.5 L17,28.5" fill="none" stroke="#222" stroke-width="1.3" stroke-linejoin="round"/><path d="M29.5,25 L29.5,29.8 L24.7,29.8 Z" fill="#000"/></svg><div class="a" style="left:72px;top:108px;width:1082px;height:24px;background:#d5d5d5"></div><svg class="a" style="left:78px;top:115px" width="10" height="10" viewBox="0 0 10 10" ><path d="M0.9,0.9 L8.9,8.9 M8.9,0.9 L0.9,8.9" stroke="#5a5a5a" stroke-width="1.1"/></svg><svg class="a" style="left:95px;top:111px" width="18" height="18" viewBox="0 0 18 18" ><defs><linearGradient id="tabring" x1="0" y1="0" x2="1" y2="1"><stop offset="0" stop-color="#8aa8d8"/><stop offset="0.5" stop-color="#2a4a9a"/><stop offset="1" stop-color="#1a3080"/></linearGradient></defs><circle cx="7.2" cy="7.6" r="5.6" fill="#f4f4f4" stroke="url(#tabring)" stroke-width="2.2"/><path d="M4,7.6 L10.5,7.6 M7.2,4.5 L7.2,11" stroke="#b8b8c8" stroke-width="0.5"/><path d="M4.5,10 L6,9 M8,5 L9.5,4.5" stroke="#e08080" stroke-width="0.5"/><path d="M7.5,8 L12.3,12.8" stroke="#f0a020" stroke-width="2"/><circle cx="12.8" cy="13.2" r="1.3" fill="#e06060"/></svg><div class="a t" style="left:592.7px;top:113.34px;font-size:12px;color:#111;">* birdhouse.dxf</div><div class="a" style="left:72px;top:132px;width:1081px;height:23px;background:#ececec"></div><div class="a" style="left:72px;top:155px;width:23px;height:577px;background:#ececec"></div><div class="a" style="left:94px;top:132px;width:1047px;height:23px;overflow:hidden"><div class="a" style="left:3.3px;top:16px;width:1px;height:7px;background:#6a6a6a"></div><div class="a t" style="left:-26.2px;top:0.8px;width:60px;text-align:center;font-size:10px;color:#111;transform:scaleX(0.88)">-80</div><div class="a" style="left:26.0px;top:16px;width:1px;height:7px;background:#6a6a6a"></div><div class="a t" style="left:-3.5px;top:0.8px;width:60px;text-align:center;font-size:10px;color:#111;transform:scaleX(0.88)">-70</div><div class="a" style="left:48.7px;top:16px;width:1px;height:7px;background:#6a6a6a"></div><div class="a t" style="left:19.2px;top:0.8px;width:60px;text-align:center;font-size:10px;color:#111;transform:scaleX(0.88)">-60</div><div class="a" style="left:71.4px;top:16px;width:1px;height:7px;background:#6a6a6a"></div><div class="a t" style="left:41.9px;top:0.8px;width:60px;text-align:center;font-size:10px;color:#111;transform:scaleX(0.88)">-50</div><div class="a" style="left:94.1px;top:16px;width:1px;height:7px;background:#6a6a6a"></div><div class="a t" style="left:64.6px;top:0.8px;width:60px;text-align:center;font-size:10px;color:#111;transform:scaleX(0.88)">-40</div><div class="a" style="left:116.8px;top:16px;width:1px;height:7px;background:#6a6a6a"></div><div class="a t" style="left:87.3px;top:0.8px;width:60px;text-align:center;font-size:10px;color:#111;transform:scaleX(0.88)">-30</div><div class="a" style="left:139.6px;top:16px;width:1px;height:7px;background:#6a6a6a"></div><div class="a t" style="left:110.1px;top:0.8px;width:60px;text-align:center;font-size:10px;color:#111;transform:scaleX(0.88)">-20</div><div class="a" style="left:162.3px;top:16px;width:1px;height:7px;background:#6a6a6a"></div><div class="a t" style="left:132.8px;top:0.8px;width:60px;text-align:center;font-size:10px;color:#111;transform:scaleX(0.88)">-10</div><div class="a" style="left:185.0px;top:16px;width:1px;height:7px;background:#6a6a6a"></div><div class="a t" style="left:155.5px;top:0.8px;width:60px;text-align:center;font-size:10px;color:#111;transform:scaleX(0.88)">0</div><div class="a" style="left:207.7px;top:16px;width:1px;height:7px;background:#6a6a6a"></div><div class="a t" style="left:178.2px;top:0.8px;width:60px;text-align:center;font-size:10px;color:#111;transform:scaleX(0.88)">10</div><div class="a" style="left:230.4px;top:16px;width:1px;height:7px;background:#6a6a6a"></div><div class="a t" style="left:200.9px;top:0.8px;width:60px;text-align:center;font-size:10px;color:#111;transform:scaleX(0.88)">20</div><div class="a" style="left:253.2px;top:16px;width:1px;height:7px;background:#6a6a6a"></div><div class="a t" style="left:223.7px;top:0.8px;width:60px;text-align:center;font-size:10px;color:#111;transform:scaleX(0.88)">30</div><div class="a" style="left:275.9px;top:16px;width:1px;height:7px;background:#6a6a6a"></div><div class="a t" style="left:246.4px;top:0.8px;width:60px;text-align:center;font-size:10px;color:#111;transform:scaleX(0.88)">40</div><div class="a" style="left:298.6px;top:16px;width:1px;height:7px;background:#6a6a6a"></div><div class="a t" style="left:269.1px;top:0.8px;width:60px;text-align:center;font-size:10px;color:#111;transform:scaleX(0.88)">50</div><div class="a" style="left:321.3px;top:16px;width:1px;height:7px;background:#6a6a6a"></div><div class="a t" style="left:291.8px;top:0.8px;width:60px;text-align:center;font-size:10px;color:#111;transform:scaleX(0.88)">60</div><div class="a" style="left:344.0px;top:16px;width:1px;height:7px;background:#6a6a6a"></div><div class="a t" style="left:314.5px;top:0.8px;width:60px;text-align:center;font-size:10px;color:#111;transform:scaleX(0.88)">70</div><div class="a" style="left:366.7px;top:16px;width:1px;height:7px;background:#6a6a6a"></div><div class="a t" style="left:337.2px;top:0.8px;width:60px;text-align:center;font-size:10px;color:#111;transform:scaleX(0.88)">80</div><div class="a" style="left:389.5px;top:16px;width:1px;height:7px;background:#6a6a6a"></div><div class="a t" style="left:360.0px;top:0.8px;width:60px;text-align:center;font-size:10px;color:#111;transform:scaleX(0.88)">90</div><div class="a" style="left:412.2px;top:16px;width:1px;height:7px;background:#6a6a6a"></div><div class="a t" style="left:382.7px;top:0.8px;width:60px;text-align:center;font-size:10px;color:#111;transform:scaleX(0.88)">100</div><div class="a" style="left:434.9px;top:16px;width:1px;height:7px;background:#6a6a6a"></div><div class="a t" style="left:405.4px;top:0.8px;width:60px;text-align:center;font-size:10px;color:#111;transform:scaleX(0.88)">110</div><div class="a" style="left:457.6px;top:16px;width:1px;height:7px;background:#6a6a6a"></div><div class="a t" style="left:428.1px;top:0.8px;width:60px;text-align:center;font-size:10px;color:#111;transform:scaleX(0.88)">120</div><div class="a" style="left:480.3px;top:16px;width:1px;height:7px;background:#6a6a6a"></div><div class="a t" style="left:450.8px;top:0.8px;width:60px;text-align:center;font-size:10px;color:#111;transform:scaleX(0.88)">130</div><div class="a" style="left:503.1px;top:16px;width:1px;height:7px;background:#6a6a6a"></div><div class="a t" style="left:473.6px;top:0.8px;width:60px;text-align:center;font-size:10px;color:#111;transform:scaleX(0.88)">140</div><div class="a" style="left:525.8px;top:16px;width:1px;height:7px;background:#6a6a6a"></div><div class="a t" style="left:496.3px;top:0.8px;width:60px;text-align:center;font-size:10px;color:#111;transform:scaleX(0.88)">150</div><div class="a" style="left:548.5px;top:16px;width:1px;height:7px;background:#6a6a6a"></div><div class="a t" style="left:519.0px;top:0.8px;width:60px;text-align:center;font-size:10px;color:#111;transform:scaleX(0.88)">160</div><div class="a" style="left:571.2px;top:16px;width:1px;height:7px;background:#6a6a6a"></div><div class="a t" style="left:541.7px;top:0.8px;width:60px;text-align:center;font-size:10px;color:#111;transform:scaleX(0.88)">170</div><div class="a" style="left:593.9px;top:16px;width:1px;height:7px;background:#6a6a6a"></div><div class="a t" style="left:564.4px;top:0.8px;width:60px;text-align:center;font-size:10px;color:#111;transform:scaleX(0.88)">180</div><div class="a" style="left:616.6px;top:16px;width:1px;height:7px;background:#6a6a6a"></div><div class="a t" style="left:587.1px;top:0.8px;width:60px;text-align:center;font-size:10px;color:#111;transform:scaleX(0.88)">190</div><div class="a" style="left:639.4px;top:16px;width:1px;height:7px;background:#6a6a6a"></div><div class="a t" style="left:609.9px;top:0.8px;width:60px;text-align:center;font-size:10px;color:#111;transform:scaleX(0.88)">200</div><div class="a" style="left:662.1px;top:16px;width:1px;height:7px;background:#6a6a6a"></div><div class="a t" style="left:632.6px;top:0.8px;width:60px;text-align:center;font-size:10px;color:#111;transform:scaleX(0.88)">210</div><div class="a" style="left:684.8px;top:16px;width:1px;height:7px;background:#6a6a6a"></div><div class="a t" style="left:655.3px;top:0.8px;width:60px;text-align:center;font-size:10px;color:#111;transform:scaleX(0.88)">220</div><div class="a" style="left:707.5px;top:16px;width:1px;height:7px;background:#6a6a6a"></div><div class="a t" style="left:678.0px;top:0.8px;width:60px;text-align:center;font-size:10px;color:#111;transform:scaleX(0.88)">230</div><div class="a" style="left:730.2px;top:16px;width:1px;height:7px;background:#6a6a6a"></div><div class="a t" style="left:700.7px;top:0.8px;width:60px;text-align:center;font-size:10px;color:#111;transform:scaleX(0.88)">240</div><div class="a" style="left:752.9px;top:16px;width:1px;height:7px;background:#6a6a6a"></div><div class="a t" style="left:723.4px;top:0.8px;width:60px;text-align:center;font-size:10px;color:#111;transform:scaleX(0.88)">250</div><div class="a" style="left:775.7px;top:16px;width:1px;height:7px;background:#6a6a6a"></div><div class="a t" style="left:746.2px;top:0.8px;width:60px;text-align:center;font-size:10px;color:#111;transform:scaleX(0.88)">260</div><div class="a" style="left:798.4px;top:16px;width:1px;height:7px;background:#6a6a6a"></div><div class="a t" style="left:768.9px;top:0.8px;width:60px;text-align:center;font-size:10px;color:#111;transform:scaleX(0.88)">270</div><div class="a" style="left:821.1px;top:16px;width:1px;height:7px;background:#6a6a6a"></div><div class="a t" style="left:791.6px;top:0.8px;width:60px;text-align:center;font-size:10px;color:#111;transform:scaleX(0.88)">280</div><div class="a" style="left:843.8px;top:16px;width:1px;height:7px;background:#6a6a6a"></div><div class="a t" style="left:814.3px;top:0.8px;width:60px;text-align:center;font-size:10px;color:#111;transform:scaleX(0.88)">290</div><div class="a" style="left:866.5px;top:16px;width:1px;height:7px;background:#6a6a6a"></div><div class="a t" style="left:837.0px;top:0.8px;width:60px;text-align:center;font-size:10px;color:#111;transform:scaleX(0.88)">300</div><div class="a" style="left:889.3px;top:16px;width:1px;height:7px;background:#6a6a6a"></div><div class="a t" style="left:859.8px;top:0.8px;width:60px;text-align:center;font-size:10px;color:#111;transform:scaleX(0.88)">310</div><div class="a" style="left:912.0px;top:16px;width:1px;height:7px;background:#6a6a6a"></div><div class="a t" style="left:882.5px;top:0.8px;width:60px;text-align:center;font-size:10px;color:#111;transform:scaleX(0.88)">320</div><div class="a" style="left:934.7px;top:16px;width:1px;height:7px;background:#6a6a6a"></div><div class="a t" style="left:905.2px;top:0.8px;width:60px;text-align:center;font-size:10px;color:#111;transform:scaleX(0.88)">330</div><div class="a" style="left:957.4px;top:16px;width:1px;height:7px;background:#6a6a6a"></div><div class="a t" style="left:927.9px;top:0.8px;width:60px;text-align:center;font-size:10px;color:#111;transform:scaleX(0.88)">340</div><div class="a" style="left:980.1px;top:16px;width:1px;height:7px;background:#6a6a6a"></div><div class="a t" style="left:950.6px;top:0.8px;width:60px;text-align:center;font-size:10px;color:#111;transform:scaleX(0.88)">350</div><div class="a" style="left:1002.8px;top:16px;width:1px;height:7px;background:#6a6a6a"></div><div class="a t" style="left:973.3px;top:0.8px;width:60px;text-align:center;font-size:10px;color:#111;transform:scaleX(0.88)">360</div><div class="a" style="left:1025.6px;top:16px;width:1px;height:7px;background:#6a6a6a"></div><div class="a t" style="left:996.1px;top:0.8px;width:60px;text-align:center;font-size:10px;color:#111;transform:scaleX(0.88)">370</div><div class="a" style="left:1048.3px;top:16px;width:1px;height:7px;background:#6a6a6a"></div><div class="a t" style="left:1018.8px;top:0.8px;width:60px;text-align:center;font-size:10px;color:#111;transform:scaleX(0.88)">380</div></div><div class="a" style="left:72px;top:155px;width:23px;height:577px;overflow:hidden"><div class="a" style="left:16px;top:572.2px;width:7px;height:1px;background:#6a6a6a"></div><div class="a t" style="left:-23.4px;top:564.8px;width:60px;height:10px;text-align:center;font-size:10px;color:#111;transform:rotate(-90deg) scaleX(0.88)">-20</div><div class="a" style="left:16px;top:549.5px;width:7px;height:1px;background:#6a6a6a"></div><div class="a t" style="left:-23.4px;top:545.0px;width:60px;height:10px;text-align:center;font-size:10px;color:#111;transform:rotate(-90deg) scaleX(0.88)">-10</div><div class="a" style="left:16px;top:526.8px;width:7px;height:1px;background:#6a6a6a"></div><div class="a t" style="left:-23.4px;top:522.3px;width:60px;height:10px;text-align:center;font-size:10px;color:#111;transform:rotate(-90deg) scaleX(0.88)">0</div><div class="a" style="left:16px;top:504.1px;width:7px;height:1px;background:#6a6a6a"></div><div class="a t" style="left:-23.4px;top:499.6px;width:60px;height:10px;text-align:center;font-size:10px;color:#111;transform:rotate(-90deg) scaleX(0.88)">10</div><div class="a" style="left:16px;top:481.4px;width:7px;height:1px;background:#6a6a6a"></div><div class="a t" style="left:-23.4px;top:476.9px;width:60px;height:10px;text-align:center;font-size:10px;color:#111;transform:rotate(-90deg) scaleX(0.88)">20</div><div class="a" style="left:16px;top:458.6px;width:7px;height:1px;background:#6a6a6a"></div><div class="a t" style="left:-23.4px;top:454.1px;width:60px;height:10px;text-align:center;font-size:10px;color:#111;transform:rotate(-90deg) scaleX(0.88)">30</div><div class="a" style="left:16px;top:435.9px;width:7px;height:1px;background:#6a6a6a"></div><div class="a t" style="left:-23.4px;top:431.4px;width:60px;height:10px;text-align:center;font-size:10px;color:#111;transform:rotate(-90deg) scaleX(0.88)">40</div><div class="a" style="left:16px;top:413.2px;width:7px;height:1px;background:#6a6a6a"></div><div class="a t" style="left:-23.4px;top:408.7px;width:60px;height:10px;text-align:center;font-size:10px;color:#111;transform:rotate(-90deg) scaleX(0.88)">50</div><div class="a" style="left:16px;top:390.5px;width:7px;height:1px;background:#6a6a6a"></div><div class="a t" style="left:-23.4px;top:386.0px;width:60px;height:10px;text-align:center;font-size:10px;color:#111;transform:rotate(-90deg) scaleX(0.88)">60</div><div class="a" style="left:16px;top:367.8px;width:7px;height:1px;background:#6a6a6a"></div><div class="a t" style="left:-23.4px;top:363.3px;width:60px;height:10px;text-align:center;font-size:10px;color:#111;transform:rotate(-90deg) scaleX(0.88)">70</div><div class="a" style="left:16px;top:345.1px;width:7px;height:1px;background:#6a6a6a"></div><div class="a t" style="left:-23.4px;top:340.6px;width:60px;height:10px;text-align:center;font-size:10px;color:#111;transform:rotate(-90deg) scaleX(0.88)">80</div><div class="a" style="left:16px;top:322.3px;width:7px;height:1px;background:#6a6a6a"></div><div class="a t" style="left:-23.4px;top:317.8px;width:60px;height:10px;text-align:center;font-size:10px;color:#111;transform:rotate(-90deg) scaleX(0.88)">90</div><div class="a" style="left:16px;top:299.6px;width:7px;height:1px;background:#6a6a6a"></div><div class="a t" style="left:-23.4px;top:295.1px;width:60px;height:10px;text-align:center;font-size:10px;color:#111;transform:rotate(-90deg) scaleX(0.88)">100</div><div class="a" style="left:16px;top:276.9px;width:7px;height:1px;background:#6a6a6a"></div><div class="a t" style="left:-23.4px;top:272.4px;width:60px;height:10px;text-align:center;font-size:10px;color:#111;transform:rotate(-90deg) scaleX(0.88)">110</div><div class="a" style="left:16px;top:254.2px;width:7px;height:1px;background:#6a6a6a"></div><div class="a t" style="left:-23.4px;top:249.7px;width:60px;height:10px;text-align:center;font-size:10px;color:#111;transform:rotate(-90deg) scaleX(0.88)">120</div><div class="a" style="left:16px;top:231.5px;width:7px;height:1px;background:#6a6a6a"></div><div class="a t" style="left:-23.4px;top:227.0px;width:60px;height:10px;text-align:center;font-size:10px;color:#111;transform:rotate(-90deg) scaleX(0.88)">130</div><div class="a" style="left:16px;top:208.7px;width:7px;height:1px;background:#6a6a6a"></div><div class="a t" style="left:-23.4px;top:204.2px;width:60px;height:10px;text-align:center;font-size:10px;color:#111;transform:rotate(-90deg) scaleX(0.88)">140</div><div class="a" style="left:16px;top:186.0px;width:7px;height:1px;background:#6a6a6a"></div><div class="a t" style="left:-23.4px;top:181.5px;width:60px;height:10px;text-align:center;font-size:10px;color:#111;transform:rotate(-90deg) scaleX(0.88)">150</div><div class="a" style="left:16px;top:163.3px;width:7px;height:1px;background:#6a6a6a"></div><div class="a t" style="left:-23.4px;top:158.8px;width:60px;height:10px;text-align:center;font-size:10px;color:#111;transform:rotate(-90deg) scaleX(0.88)">160</div><div class="a" style="left:16px;top:140.6px;width:7px;height:1px;background:#6a6a6a"></div><div class="a t" style="left:-23.4px;top:136.1px;width:60px;height:10px;text-align:center;font-size:10px;color:#111;transform:rotate(-90deg) scaleX(0.88)">170</div><div class="a" style="left:16px;top:117.9px;width:7px;height:1px;background:#6a6a6a"></div><div class="a t" style="left:-23.4px;top:113.4px;width:60px;height:10px;text-align:center;font-size:10px;color:#111;transform:rotate(-90deg) scaleX(0.88)">180</div><div class="a" style="left:16px;top:95.2px;width:7px;height:1px;background:#6a6a6a"></div><div class="a t" style="left:-23.4px;top:90.7px;width:60px;height:10px;text-align:center;font-size:10px;color:#111;transform:rotate(-90deg) scaleX(0.88)">190</div><div class="a" style="left:16px;top:72.4px;width:7px;height:1px;background:#6a6a6a"></div><div class="a t" style="left:-23.4px;top:67.9px;width:60px;height:10px;text-align:center;font-size:10px;color:#111;transform:rotate(-90deg) scaleX(0.88)">200</div><div class="a" style="left:16px;top:49.7px;width:7px;height:1px;background:#6a6a6a"></div><div class="a t" style="left:-23.4px;top:45.2px;width:60px;height:10px;text-align:center;font-size:10px;color:#111;transform:rotate(-90deg) scaleX(0.88)">210</div><div class="a" style="left:16px;top:27.0px;width:7px;height:1px;background:#6a6a6a"></div><div class="a t" style="left:-23.4px;top:22.5px;width:60px;height:10px;text-align:center;font-size:10px;color:#111;transform:rotate(-90deg) scaleX(0.88)">220</div><div class="a" style="left:16px;top:4.3px;width:7px;height:1px;background:#6a6a6a"></div><div class="a t" style="left:-23.4px;top:-0.2px;width:60px;height:10px;text-align:center;font-size:10px;color:#111;transform:rotate(-90deg) scaleX(0.88)">230</div></div><svg class="a" style="left:523px;top:145px" width="12" height="8" viewBox="0 0 12 8" ><path d="M0.5,0.5 L11.5,0.5 L6,7 Z" fill="#000"/></svg><svg class="a" style="left:84.5px;top:267px" width="8" height="13" viewBox="0 0 8 13" ><path d="M0.3,0 L0.3,12.2 L7,6.1 Z" fill="#000"/></svg><div class="a" style="left:95px;top:155px;width:1044px;height:577px;overflow:hidden"><svg class="a" style="left:0px;top:0px" width="1044" height="577" viewBox="0 0 1044 577" id="canvassvg"><g id="cv"><rect x="0" y="0" width="1044" height="577" fill="#d3d3d3"/><path d="M2.3,572.2h1v1h-1zM2.3,549.5h1v1h-1zM2.3,526.8h1v1h-1zM2.3,504.1h1v1h-1zM2.3,481.4h1v1h-1zM2.3,458.6h1v1h-1zM2.3,435.9h1v1h-1zM2.3,413.2h1v1h-1zM2.3,390.5h1v1h-1zM2.3,367.8h1v1h-1zM2.3,345.1h1v1h-1zM2.3,322.3h1v1h-1zM2.3,299.6h1v1h-1zM2.3,276.9h1v1h-1zM2.3,254.2h1v1h-1zM2.3,231.5h1v1h-1zM2.3,208.7h1v1h-1zM2.3,186.0h1v1h-1zM2.3,163.3h1v1h-1zM2.3,140.6h1v1h-1zM2.3,117.9h1v1h-1zM2.3,95.2h1v1h-1zM2.3,72.4h1v1h-1zM2.3,49.7h1v1h-1zM2.3,27.0h1v1h-1zM2.3,4.3h1v1h-1zM25.0,572.2h1v1h-1zM25.0,549.5h1v1h-1zM25.0,526.8h1v1h-1zM25.0,504.1h1v1h-1zM25.0,481.4h1v1h-1zM25.0,458.6h1v1h-1zM25.0,435.9h1v1h-1zM25.0,413.2h1v1h-1zM25.0,390.5h1v1h-1zM25.0,367.8h1v1h-1zM25.0,345.1h1v1h-1zM25.0,322.3h1v1h-1zM25.0,299.6h1v1h-1zM25.0,276.9h1v1h-1zM25.0,254.2h1v1h-1zM25.0,231.5h1v1h-1zM25.0,208.7h1v1h-1zM25.0,186.0h1v1h-1zM25.0,163.3h1v1h-1zM25.0,140.6h1v1h-1zM25.0,117.9h1v1h-1zM25.0,95.2h1v1h-1zM25.0,72.4h1v1h-1zM25.0,49.7h1v1h-1zM25.0,27.0h1v1h-1zM25.0,4.3h1v1h-1zM47.7,572.2h1v1h-1zM47.7,549.5h1v1h-1zM47.7,526.8h1v1h-1zM47.7,504.1h1v1h-1zM47.7,481.4h1v1h-1zM47.7,458.6h1v1h-1zM47.7,435.9h1v1h-1zM47.7,413.2h1v1h-1zM47.7,390.5h1v1h-1zM47.7,367.8h1v1h-1zM47.7,345.1h1v1h-1zM47.7,322.3h1v1h-1zM47.7,299.6h1v1h-1zM47.7,276.9h1v1h-1zM47.7,254.2h1v1h-1zM47.7,231.5h1v1h-1zM47.7,208.7h1v1h-1zM47.7,186.0h1v1h-1zM47.7,163.3h1v1h-1zM47.7,140.6h1v1h-1zM47.7,117.9h1v1h-1zM47.7,95.2h1v1h-1zM47.7,72.4h1v1h-1zM47.7,49.7h1v1h-1zM47.7,27.0h1v1h-1zM47.7,4.3h1v1h-1zM70.4,572.2h1v1h-1zM70.4,549.5h1v1h-1zM70.4,526.8h1v1h-1zM70.4,504.1h1v1h-1zM70.4,481.4h1v1h-1zM70.4,458.6h1v1h-1zM70.4,435.9h1v1h-1zM70.4,413.2h1v1h-1zM70.4,390.5h1v1h-1zM70.4,367.8h1v1h-1zM70.4,345.1h1v1h-1zM70.4,322.3h1v1h-1zM70.4,299.6h1v1h-1zM70.4,276.9h1v1h-1zM70.4,254.2h1v1h-1zM70.4,231.5h1v1h-1zM70.4,208.7h1v1h-1zM70.4,186.0h1v1h-1zM70.4,163.3h1v1h-1zM70.4,140.6h1v1h-1zM70.4,117.9h1v1h-1zM70.4,95.2h1v1h-1zM70.4,72.4h1v1h-1zM70.4,49.7h1v1h-1zM70.4,27.0h1v1h-1zM70.4,4.3h1v1h-1zM93.1,572.2h1v1h-1zM93.1,549.5h1v1h-1zM93.1,526.8h1v1h-1zM93.1,504.1h1v1h-1zM93.1,481.4h1v1h-1zM93.1,458.6h1v1h-1zM93.1,435.9h1v1h-1zM93.1,413.2h1v1h-1zM93.1,390.5h1v1h-1zM93.1,367.8h1v1h-1zM93.1,345.1h1v1h-1zM93.1,322.3h1v1h-1zM93.1,299.6h1v1h-1zM93.1,276.9h1v1h-1zM93.1,254.2h1v1h-1zM93.1,231.5h1v1h-1zM93.1,208.7h1v1h-1zM93.1,186.0h1v1h-1zM93.1,163.3h1v1h-1zM93.1,140.6h1v1h-1zM93.1,117.9h1v1h-1zM93.1,95.2h1v1h-1zM93.1,72.4h1v1h-1zM93.1,49.7h1v1h-1zM93.1,27.0h1v1h-1zM93.1,4.3h1v1h-1zM115.8,572.2h1v1h-1zM115.8,549.5h1v1h-1zM115.8,526.8h1v1h-1zM115.8,504.1h1v1h-1zM115.8,481.4h1v1h-1zM115.8,458.6h1v1h-1zM115.8,435.9h1v1h-1zM115.8,413.2h1v1h-1zM115.8,390.5h1v1h-1zM115.8,367.8h1v1h-1zM115.8,345.1h1v1h-1zM115.8,322.3h1v1h-1zM115.8,299.6h1v1h-1zM115.8,276.9h1v1h-1zM115.8,254.2h1v1h-1zM115.8,231.5h1v1h-1zM115.8,208.7h1v1h-1zM115.8,186.0h1v1h-1zM115.8,163.3h1v1h-1zM115.8,140.6h1v1h-1zM115.8,117.9h1v1h-1zM115.8,95.2h1v1h-1zM115.8,72.4h1v1h-1zM115.8,49.7h1v1h-1zM115.8,27.0h1v1h-1zM115.8,4.3h1v1h-1zM138.6,572.2h1v1h-1zM138.6,549.5h1v1h-1zM138.6,526.8h1v1h-1zM138.6,504.1h1v1h-1zM138.6,481.4h1v1h-1zM138.6,458.6h1v1h-1zM138.6,435.9h1v1h-1zM138.6,413.2h1v1h-1zM138.6,390.5h1v1h-1zM138.6,367.8h1v1h-1zM138.6,345.1h1v1h-1zM138.6,322.3h1v1h-1zM138.6,299.6h1v1h-1zM138.6,276.9h1v1h-1zM138.6,254.2h1v1h-1zM138.6,231.5h1v1h-1zM138.6,208.7h1v1h-1zM138.6,186.0h1v1h-1zM138.6,163.3h1v1h-1zM138.6,140.6h1v1h-1zM138.6,117.9h1v1h-1zM138.6,95.2h1v1h-1zM138.6,72.4h1v1h-1zM138.6,49.7h1v1h-1zM138.6,27.0h1v1h-1zM138.6,4.3h1v1h-1zM161.3,572.2h1v1h-1zM161.3,549.5h1v1h-1zM161.3,526.8h1v1h-1zM161.3,504.1h1v1h-1zM161.3,481.4h1v1h-1zM161.3,458.6h1v1h-1zM161.3,435.9h1v1h-1zM161.3,413.2h1v1h-1zM161.3,390.5h1v1h-1zM161.3,367.8h1v1h-1zM161.3,345.1h1v1h-1zM161.3,322.3h1v1h-1zM161.3,299.6h1v1h-1zM161.3,276.9h1v1h-1zM161.3,254.2h1v1h-1zM161.3,231.5h1v1h-1zM161.3,208.7h1v1h-1zM161.3,186.0h1v1h-1zM161.3,163.3h1v1h-1zM161.3,140.6h1v1h-1zM161.3,117.9h1v1h-1zM161.3,95.2h1v1h-1zM161.3,72.4h1v1h-1zM161.3,49.7h1v1h-1zM161.3,27.0h1v1h-1zM161.3,4.3h1v1h-1zM184.0,572.2h1v1h-1zM184.0,549.5h1v1h-1zM184.0,526.8h1v1h-1zM184.0,504.1h1v1h-1zM184.0,481.4h1v1h-1zM184.0,458.6h1v1h-1zM184.0,435.9h1v1h-1zM184.0,413.2h1v1h-1zM184.0,390.5h1v1h-1zM184.0,367.8h1v1h-1zM184.0,345.1h1v1h-1zM184.0,322.3h1v1h-1zM184.0,299.6h1v1h-1zM184.0,276.9h1v1h-1zM184.0,254.2h1v1h-1zM184.0,231.5h1v1h-1zM184.0,208.7h1v1h-1zM184.0,186.0h1v1h-1zM184.0,163.3h1v1h-1zM184.0,140.6h1v1h-1zM184.0,117.9h1v1h-1zM184.0,95.2h1v1h-1zM184.0,72.4h1v1h-1zM184.0,49.7h1v1h-1zM184.0,27.0h1v1h-1zM184.0,4.3h1v1h-1zM206.7,572.2h1v1h-1zM206.7,549.5h1v1h-1zM206.7,526.8h1v1h-1zM206.7,504.1h1v1h-1zM206.7,481.4h1v1h-1zM206.7,458.6h1v1h-1zM206.7,435.9h1v1h-1zM206.7,413.2h1v1h-1zM206.7,390.5h1v1h-1zM206.7,367.8h1v1h-1zM206.7,345.1h1v1h-1zM206.7,322.3h1v1h-1zM206.7,299.6h1v1h-1zM206.7,276.9h1v1h-1zM206.7,254.2h1v1h-1zM206.7,231.5h1v1h-1zM206.7,208.7h1v1h-1zM206.7,186.0h1v1h-1zM206.7,163.3h1v1h-1zM206.7,140.6h1v1h-1zM206.7,117.9h1v1h-1zM206.7,95.2h1v1h-1zM206.7,72.4h1v1h-1zM206.7,49.7h1v1h-1zM206.7,27.0h1v1h-1zM206.7,4.3h1v1h-1zM229.4,572.2h1v1h-1zM229.4,549.5h1v1h-1zM229.4,526.8h1v1h-1zM229.4,504.1h1v1h-1zM229.4,481.4h1v1h-1zM229.4,458.6h1v1h-1zM229.4,435.9h1v1h-1zM229.4,413.2h1v1h-1zM229.4,390.5h1v1h-1zM229.4,367.8h1v1h-1zM229.4,345.1h1v1h-1zM229.4,322.3h1v1h-1zM229.4,299.6h1v1h-1zM229.4,276.9h1v1h-1zM229.4,254.2h1v1h-1zM229.4,231.5h1v1h-1zM229.4,208.7h1v1h-1zM229.4,186.0h1v1h-1zM229.4,163.3h1v1h-1zM229.4,140.6h1v1h-1zM229.4,117.9h1v1h-1zM229.4,95.2h1v1h-1zM229.4,72.4h1v1h-1zM229.4,49.7h1v1h-1zM229.4,27.0h1v1h-1zM229.4,4.3h1v1h-1zM252.2,572.2h1v1h-1zM252.2,549.5h1v1h-1zM252.2,526.8h1v1h-1zM252.2,504.1h1v1h-1zM252.2,481.4h1v1h-1zM252.2,458.6h1v1h-1zM252.2,435.9h1v1h-1zM252.2,413.2h1v1h-1zM252.2,390.5h1v1h-1zM252.2,367.8h1v1h-1zM252.2,345.1h1v1h-1zM252.2,322.3h1v1h-1zM252.2,299.6h1v1h-1zM252.2,276.9h1v1h-1zM252.2,254.2h1v1h-1zM252.2,231.5h1v1h-1zM252.2,208.7h1v1h-1zM252.2,186.0h1v1h-1zM252.2,163.3h1v1h-1zM252.2,140.6h1v1h-1zM252.2,117.9h1v1h-1zM252.2,95.2h1v1h-1zM252.2,72.4h1v1h-1zM252.2,49.7h1v1h-1zM252.2,27.0h1v1h-1zM252.2,4.3h1v1h-1zM274.9,572.2h1v1h-1zM274.9,549.5h1v1h-1zM274.9,526.8h1v1h-1zM274.9,504.1h1v1h-1zM274.9,481.4h1v1h-1zM274.9,458.6h1v1h-1zM274.9,435.9h1v1h-1zM274.9,413.2h1v1h-1zM274.9,390.5h1v1h-1zM274.9,367.8h1v1h-1zM274.9,345.1h1v1h-1zM274.9,322.3h1v1h-1zM274.9,299.6h1v1h-1zM274.9,276.9h1v1h-1zM274.9,254.2h1v1h-1zM274.9,231.5h1v1h-1zM274.9,208.7h1v1h-1zM274.9,186.0h1v1h-1zM274.9,163.3h1v1h-1zM274.9,140.6h1v1h-1zM274.9,117.9h1v1h-1zM274.9,95.2h1v1h-1zM274.9,72.4h1v1h-1zM274.9,49.7h1v1h-1zM274.9,27.0h1v1h-1zM274.9,4.3h1v1h-1zM297.6,572.2h1v1h-1zM297.6,549.5h1v1h-1zM297.6,526.8h1v1h-1zM297.6,504.1h1v1h-1zM297.6,481.4h1v1h-1zM297.6,458.6h1v1h-1zM297.6,435.9h1v1h-1zM297.6,413.2h1v1h-1zM297.6,390.5h1v1h-1zM297.6,367.8h1v1h-1zM297.6,345.1h1v1h-1zM297.6,322.3h1v1h-1zM297.6,299.6h1v1h-1zM297.6,276.9h1v1h-1zM297.6,254.2h1v1h-1zM297.6,231.5h1v1h-1zM297.6,208.7h1v1h-1zM297.6,186.0h1v1h-1zM297.6,163.3h1v1h-1zM297.6,140.6h1v1h-1zM297.6,117.9h1v1h-1zM297.6,95.2h1v1h-1zM297.6,72.4h1v1h-1zM297.6,49.7h1v1h-1zM297.6,27.0h1v1h-1zM297.6,4.3h1v1h-1zM320.3,572.2h1v1h-1zM320.3,549.5h1v1h-1zM320.3,526.8h1v1h-1zM320.3,504.1h1v1h-1zM320.3,481.4h1v1h-1zM320.3,458.6h1v1h-1zM320.3,435.9h1v1h-1zM320.3,413.2h1v1h-1zM320.3,390.5h1v1h-1zM320.3,367.8h1v1h-1zM320.3,345.1h1v1h-1zM320.3,322.3h1v1h-1zM320.3,299.6h1v1h-1zM320.3,276.9h1v1h-1zM320.3,254.2h1v1h-1zM320.3,231.5h1v1h-1zM320.3,208.7h1v1h-1zM320.3,186.0h1v1h-1zM320.3,163.3h1v1h-1zM320.3,140.6h1v1h-1zM320.3,117.9h1v1h-1zM320.3,95.2h1v1h-1zM320.3,72.4h1v1h-1zM320.3,49.7h1v1h-1zM320.3,27.0h1v1h-1zM320.3,4.3h1v1h-1zM343.0,572.2h1v1h-1zM343.0,549.5h1v1h-1zM343.0,526.8h1v1h-1zM343.0,504.1h1v1h-1zM343.0,481.4h1v1h-1zM343.0,458.6h1v1h-1zM343.0,435.9h1v1h-1zM343.0,413.2h1v1h-1zM343.0,390.5h1v1h-1zM343.0,367.8h1v1h-1zM343.0,345.1h1v1h-1zM343.0,322.3h1v1h-1zM343.0,299.6h1v1h-1zM343.0,276.9h1v1h-1zM343.0,254.2h1v1h-1zM343.0,231.5h1v1h-1zM343.0,208.7h1v1h-1zM343.0,186.0h1v1h-1zM343.0,163.3h1v1h-1zM343.0,140.6h1v1h-1zM343.0,117.9h1v1h-1zM343.0,95.2h1v1h-1zM343.0,72.4h1v1h-1zM343.0,49.7h1v1h-1zM343.0,27.0h1v1h-1zM343.0,4.3h1v1h-1zM365.7,572.2h1v1h-1zM365.7,549.5h1v1h-1zM365.7,526.8h1v1h-1zM365.7,504.1h1v1h-1zM365.7,481.4h1v1h-1zM365.7,458.6h1v1h-1zM365.7,435.9h1v1h-1zM365.7,413.2h1v1h-1zM365.7,390.5h1v1h-1zM365.7,367.8h1v1h-1zM365.7,345.1h1v1h-1zM365.7,322.3h1v1h-1zM365.7,299.6h1v1h-1zM365.7,276.9h1v1h-1zM365.7,254.2h1v1h-1zM365.7,231.5h1v1h-1zM365.7,208.7h1v1h-1zM365.7,186.0h1v1h-1zM365.7,163.3h1v1h-1zM365.7,140.6h1v1h-1zM365.7,117.9h1v1h-1zM365.7,95.2h1v1h-1zM365.7,72.4h1v1h-1zM365.7,49.7h1v1h-1zM365.7,27.0h1v1h-1zM365.7,4.3h1v1h-1zM388.5,572.2h1v1h-1zM388.5,549.5h1v1h-1zM388.5,526.8h1v1h-1zM388.5,504.1h1v1h-1zM388.5,481.4h1v1h-1zM388.5,458.6h1v1h-1zM388.5,435.9h1v1h-1zM388.5,413.2h1v1h-1zM388.5,390.5h1v1h-1zM388.5,367.8h1v1h-1zM388.5,345.1h1v1h-1zM388.5,322.3h1v1h-1zM388.5,299.6h1v1h-1zM388.5,276.9h1v1h-1zM388.5,254.2h1v1h-1zM388.5,231.5h1v1h-1zM388.5,208.7h1v1h-1zM388.5,186.0h1v1h-1zM388.5,163.3h1v1h-1zM388.5,140.6h1v1h-1zM388.5,117.9h1v1h-1zM388.5,95.2h1v1h-1zM388.5,72.4h1v1h-1zM388.5,49.7h1v1h-1zM388.5,27.0h1v1h-1zM388.5,4.3h1v1h-1zM411.2,572.2h1v1h-1zM411.2,549.5h1v1h-1zM411.2,526.8h1v1h-1zM411.2,504.1h1v1h-1zM411.2,481.4h1v1h-1zM411.2,458.6h1v1h-1zM411.2,435.9h1v1h-1zM411.2,413.2h1v1h-1zM411.2,390.5h1v1h-1zM411.2,367.8h1v1h-1zM411.2,345.1h1v1h-1zM411.2,322.3h1v1h-1zM411.2,299.6h1v1h-1zM411.2,276.9h1v1h-1zM411.2,254.2h1v1h-1zM411.2,231.5h1v1h-1zM411.2,208.7h1v1h-1zM411.2,186.0h1v1h-1zM411.2,163.3h1v1h-1zM411.2,140.6h1v1h-1zM411.2,117.9h1v1h-1zM411.2,95.2h1v1h-1zM411.2,72.4h1v1h-1zM411.2,49.7h1v1h-1zM411.2,27.0h1v1h-1zM411.2,4.3h1v1h-1zM433.9,572.2h1v1h-1zM433.9,549.5h1v1h-1zM433.9,526.8h1v1h-1zM433.9,504.1h1v1h-1zM433.9,481.4h1v1h-1zM433.9,458.6h1v1h-1zM433.9,435.9h1v1h-1zM433.9,413.2h1v1h-1zM433.9,390.5h1v1h-1zM433.9,367.8h1v1h-1zM433.9,345.1h1v1h-1zM433.9,322.3h1v1h-1zM433.9,299.6h1v1h-1zM433.9,276.9h1v1h-1zM433.9,254.2h1v1h-1zM433.9,231.5h1v1h-1zM433.9,208.7h1v1h-1zM433.9,186.0h1v1h-1zM433.9,163.3h1v1h-1zM433.9,140.6h1v1h-1zM433.9,117.9h1v1h-1zM433.9,95.2h1v1h-1zM433.9,72.4h1v1h-1zM433.9,49.7h1v1h-1zM433.9,27.0h1v1h-1zM433.9,4.3h1v1h-1zM456.6,572.2h1v1h-1zM456.6,549.5h1v1h-1zM456.6,526.8h1v1h-1zM456.6,504.1h1v1h-1zM456.6,481.4h1v1h-1zM456.6,458.6h1v1h-1zM456.6,435.9h1v1h-1zM456.6,413.2h1v1h-1zM456.6,390.5h1v1h-1zM456.6,367.8h1v1h-1zM456.6,345.1h1v1h-1zM456.6,322.3h1v1h-1zM456.6,299.6h1v1h-1zM456.6,276.9h1v1h-1zM456.6,254.2h1v1h-1zM456.6,231.5h1v1h-1zM456.6,208.7h1v1h-1zM456.6,186.0h1v1h-1zM456.6,163.3h1v1h-1zM456.6,140.6h1v1h-1zM456.6,117.9h1v1h-1zM456.6,95.2h1v1h-1zM456.6,72.4h1v1h-1zM456.6,49.7h1v1h-1zM456.6,27.0h1v1h-1zM456.6,4.3h1v1h-1zM479.3,572.2h1v1h-1zM479.3,549.5h1v1h-1zM479.3,526.8h1v1h-1zM479.3,504.1h1v1h-1zM479.3,481.4h1v1h-1zM479.3,458.6h1v1h-1zM479.3,435.9h1v1h-1zM479.3,413.2h1v1h-1zM479.3,390.5h1v1h-1zM479.3,367.8h1v1h-1zM479.3,345.1h1v1h-1zM479.3,322.3h1v1h-1zM479.3,299.6h1v1h-1zM479.3,276.9h1v1h-1zM479.3,254.2h1v1h-1zM479.3,231.5h1v1h-1zM479.3,208.7h1v1h-1zM479.3,186.0h1v1h-1zM479.3,163.3h1v1h-1zM479.3,140.6h1v1h-1zM479.3,117.9h1v1h-1zM479.3,95.2h1v1h-1zM479.3,72.4h1v1h-1zM479.3,49.7h1v1h-1zM479.3,27.0h1v1h-1zM479.3,4.3h1v1h-1zM502.1,572.2h1v1h-1zM502.1,549.5h1v1h-1zM502.1,526.8h1v1h-1zM502.1,504.1h1v1h-1zM502.1,481.4h1v1h-1zM502.1,458.6h1v1h-1zM502.1,435.9h1v1h-1zM502.1,413.2h1v1h-1zM502.1,390.5h1v1h-1zM502.1,367.8h1v1h-1zM502.1,345.1h1v1h-1zM502.1,322.3h1v1h-1zM502.1,299.6h1v1h-1zM502.1,276.9h1v1h-1zM502.1,254.2h1v1h-1zM502.1,231.5h1v1h-1zM502.1,208.7h1v1h-1zM502.1,186.0h1v1h-1zM502.1,163.3h1v1h-1zM502.1,140.6h1v1h-1zM502.1,117.9h1v1h-1zM502.1,95.2h1v1h-1zM502.1,72.4h1v1h-1zM502.1,49.7h1v1h-1zM502.1,27.0h1v1h-1zM502.1,4.3h1v1h-1zM524.8,572.2h1v1h-1zM524.8,549.5h1v1h-1zM524.8,526.8h1v1h-1zM524.8,504.1h1v1h-1zM524.8,481.4h1v1h-1zM524.8,458.6h1v1h-1zM524.8,435.9h1v1h-1zM524.8,413.2h1v1h-1zM524.8,390.5h1v1h-1zM524.8,367.8h1v1h-1zM524.8,345.1h1v1h-1zM524.8,322.3h1v1h-1zM524.8,299.6h1v1h-1zM524.8,276.9h1v1h-1zM524.8,254.2h1v1h-1zM524.8,231.5h1v1h-1zM524.8,208.7h1v1h-1zM524.8,186.0h1v1h-1zM524.8,163.3h1v1h-1zM524.8,140.6h1v1h-1zM524.8,117.9h1v1h-1zM524.8,95.2h1v1h-1zM524.8,72.4h1v1h-1zM524.8,49.7h1v1h-1zM524.8,27.0h1v1h-1zM524.8,4.3h1v1h-1zM547.5,572.2h1v1h-1zM547.5,549.5h1v1h-1zM547.5,526.8h1v1h-1zM547.5,504.1h1v1h-1zM547.5,481.4h1v1h-1zM547.5,458.6h1v1h-1zM547.5,435.9h1v1h-1zM547.5,413.2h1v1h-1zM547.5,390.5h1v1h-1zM547.5,367.8h1v1h-1zM547.5,345.1h1v1h-1zM547.5,322.3h1v1h-1zM547.5,299.6h1v1h-1zM547.5,276.9h1v1h-1zM547.5,254.2h1v1h-1zM547.5,231.5h1v1h-1zM547.5,208.7h1v1h-1zM547.5,186.0h1v1h-1zM547.5,163.3h1v1h-1zM547.5,140.6h1v1h-1zM547.5,117.9h1v1h-1zM547.5,95.2h1v1h-1zM547.5,72.4h1v1h-1zM547.5,49.7h1v1h-1zM547.5,27.0h1v1h-1zM547.5,4.3h1v1h-1zM570.2,572.2h1v1h-1zM570.2,549.5h1v1h-1zM570.2,526.8h1v1h-1zM570.2,504.1h1v1h-1zM570.2,481.4h1v1h-1zM570.2,458.6h1v1h-1zM570.2,435.9h1v1h-1zM570.2,413.2h1v1h-1zM570.2,390.5h1v1h-1zM570.2,367.8h1v1h-1zM570.2,345.1h1v1h-1zM570.2,322.3h1v1h-1zM570.2,299.6h1v1h-1zM570.2,276.9h1v1h-1zM570.2,254.2h1v1h-1zM570.2,231.5h1v1h-1zM570.2,208.7h1v1h-1zM570.2,186.0h1v1h-1zM570.2,163.3h1v1h-1zM570.2,140.6h1v1h-1zM570.2,117.9h1v1h-1zM570.2,95.2h1v1h-1zM570.2,72.4h1v1h-1zM570.2,49.7h1v1h-1zM570.2,27.0h1v1h-1zM570.2,4.3h1v1h-1zM592.9,572.2h1v1h-1zM592.9,549.5h1v1h-1zM592.9,526.8h1v1h-1zM592.9,504.1h1v1h-1zM592.9,481.4h1v1h-1zM592.9,458.6h1v1h-1zM592.9,435.9h1v1h-1zM592.9,413.2h1v1h-1zM592.9,390.5h1v1h-1zM592.9,367.8h1v1h-1zM592.9,345.1h1v1h-1zM592.9,322.3h1v1h-1zM592.9,299.6h1v1h-1zM592.9,276.9h1v1h-1zM592.9,254.2h1v1h-1zM592.9,231.5h1v1h-1zM592.9,208.7h1v1h-1zM592.9,186.0h1v1h-1zM592.9,163.3h1v1h-1zM592.9,140.6h1v1h-1zM592.9,117.9h1v1h-1zM592.9,95.2h1v1h-1zM592.9,72.4h1v1h-1zM592.9,49.7h1v1h-1zM592.9,27.0h1v1h-1zM592.9,4.3h1v1h-1zM615.6,572.2h1v1h-1zM615.6,549.5h1v1h-1zM615.6,526.8h1v1h-1zM615.6,504.1h1v1h-1zM615.6,481.4h1v1h-1zM615.6,458.6h1v1h-1zM615.6,435.9h1v1h-1zM615.6,413.2h1v1h-1zM615.6,390.5h1v1h-1zM615.6,367.8h1v1h-1zM615.6,345.1h1v1h-1zM615.6,322.3h1v1h-1zM615.6,299.6h1v1h-1zM615.6,276.9h1v1h-1zM615.6,254.2h1v1h-1zM615.6,231.5h1v1h-1zM615.6,208.7h1v1h-1zM615.6,186.0h1v1h-1zM615.6,163.3h1v1h-1zM615.6,140.6h1v1h-1zM615.6,117.9h1v1h-1zM615.6,95.2h1v1h-1zM615.6,72.4h1v1h-1zM615.6,49.7h1v1h-1zM615.6,27.0h1v1h-1zM615.6,4.3h1v1h-1zM638.4,572.2h1v1h-1zM638.4,549.5h1v1h-1zM638.4,526.8h1v1h-1zM638.4,504.1h1v1h-1zM638.4,481.4h1v1h-1zM638.4,458.6h1v1h-1zM638.4,435.9h1v1h-1zM638.4,413.2h1v1h-1zM638.4,390.5h1v1h-1zM638.4,367.8h1v1h-1zM638.4,345.1h1v1h-1zM638.4,322.3h1v1h-1zM638.4,299.6h1v1h-1zM638.4,276.9h1v1h-1zM638.4,254.2h1v1h-1zM638.4,231.5h1v1h-1zM638.4,208.7h1v1h-1zM638.4,186.0h1v1h-1zM638.4,163.3h1v1h-1zM638.4,140.6h1v1h-1zM638.4,117.9h1v1h-1zM638.4,95.2h1v1h-1zM638.4,72.4h1v1h-1zM638.4,49.7h1v1h-1zM638.4,27.0h1v1h-1zM638.4,4.3h1v1h-1zM661.1,572.2h1v1h-1zM661.1,549.5h1v1h-1zM661.1,526.8h1v1h-1zM661.1,504.1h1v1h-1zM661.1,481.4h1v1h-1zM661.1,458.6h1v1h-1zM661.1,435.9h1v1h-1zM661.1,413.2h1v1h-1zM661.1,390.5h1v1h-1zM661.1,367.8h1v1h-1zM661.1,345.1h1v1h-1zM661.1,322.3h1v1h-1zM661.1,299.6h1v1h-1zM661.1,276.9h1v1h-1zM661.1,254.2h1v1h-1zM661.1,231.5h1v1h-1zM661.1,208.7h1v1h-1zM661.1,186.0h1v1h-1zM661.1,163.3h1v1h-1zM661.1,140.6h1v1h-1zM661.1,117.9h1v1h-1zM661.1,95.2h1v1h-1zM661.1,72.4h1v1h-1zM661.1,49.7h1v1h-1zM661.1,27.0h1v1h-1zM661.1,4.3h1v1h-1zM683.8,572.2h1v1h-1zM683.8,549.5h1v1h-1zM683.8,526.8h1v1h-1zM683.8,504.1h1v1h-1zM683.8,481.4h1v1h-1zM683.8,458.6h1v1h-1zM683.8,435.9h1v1h-1zM683.8,413.2h1v1h-1zM683.8,390.5h1v1h-1zM683.8,367.8h1v1h-1zM683.8,345.1h1v1h-1zM683.8,322.3h1v1h-1zM683.8,299.6h1v1h-1zM683.8,276.9h1v1h-1zM683.8,254.2h1v1h-1zM683.8,231.5h1v1h-1zM683.8,208.7h1v1h-1zM683.8,186.0h1v1h-1zM683.8,163.3h1v1h-1zM683.8,140.6h1v1h-1zM683.8,117.9h1v1h-1zM683.8,95.2h1v1h-1zM683.8,72.4h1v1h-1zM683.8,49.7h1v1h-1zM683.8,27.0h1v1h-1zM683.8,4.3h1v1h-1zM706.5,572.2h1v1h-1zM706.5,549.5h1v1h-1zM706.5,526.8h1v1h-1zM706.5,504.1h1v1h-1zM706.5,481.4h1v1h-1zM706.5,458.6h1v1h-1zM706.5,435.9h1v1h-1zM706.5,413.2h1v1h-1zM706.5,390.5h1v1h-1zM706.5,367.8h1v1h-1zM706.5,345.1h1v1h-1zM706.5,322.3h1v1h-1zM706.5,299.6h1v1h-1zM706.5,276.9h1v1h-1zM706.5,254.2h1v1h-1zM706.5,231.5h1v1h-1zM706.5,208.7h1v1h-1zM706.5,186.0h1v1h-1zM706.5,163.3h1v1h-1zM706.5,140.6h1v1h-1zM706.5,117.9h1v1h-1zM706.5,95.2h1v1h-1zM706.5,72.4h1v1h-1zM706.5,49.7h1v1h-1zM706.5,27.0h1v1h-1zM706.5,4.3h1v1h-1zM729.2,572.2h1v1h-1zM729.2,549.5h1v1h-1zM729.2,526.8h1v1h-1zM729.2,504.1h1v1h-1zM729.2,481.4h1v1h-1zM729.2,458.6h1v1h-1zM729.2,435.9h1v1h-1zM729.2,413.2h1v1h-1zM729.2,390.5h1v1h-1zM729.2,367.8h1v1h-1zM729.2,345.1h1v1h-1zM729.2,322.3h1v1h-1zM729.2,299.6h1v1h-1zM729.2,276.9h1v1h-1zM729.2,254.2h1v1h-1zM729.2,231.5h1v1h-1zM729.2,208.7h1v1h-1zM729.2,186.0h1v1h-1zM729.2,163.3h1v1h-1zM729.2,140.6h1v1h-1zM729.2,117.9h1v1h-1zM729.2,95.2h1v1h-1zM729.2,72.4h1v1h-1zM729.2,49.7h1v1h-1zM729.2,27.0h1v1h-1zM729.2,4.3h1v1h-1zM751.9,572.2h1v1h-1zM751.9,549.5h1v1h-1zM751.9,526.8h1v1h-1zM751.9,504.1h1v1h-1zM751.9,481.4h1v1h-1zM751.9,458.6h1v1h-1zM751.9,435.9h1v1h-1zM751.9,413.2h1v1h-1zM751.9,390.5h1v1h-1zM751.9,367.8h1v1h-1zM751.9,345.1h1v1h-1zM751.9,322.3h1v1h-1zM751.9,299.6h1v1h-1zM751.9,276.9h1v1h-1zM751.9,254.2h1v1h-1zM751.9,231.5h1v1h-1zM751.9,208.7h1v1h-1zM751.9,186.0h1v1h-1zM751.9,163.3h1v1h-1zM751.9,140.6h1v1h-1zM751.9,117.9h1v1h-1zM751.9,95.2h1v1h-1zM751.9,72.4h1v1h-1zM751.9,49.7h1v1h-1zM751.9,27.0h1v1h-1zM751.9,4.3h1v1h-1zM774.7,572.2h1v1h-1zM774.7,549.5h1v1h-1zM774.7,526.8h1v1h-1zM774.7,504.1h1v1h-1zM774.7,481.4h1v1h-1zM774.7,458.6h1v1h-1zM774.7,435.9h1v1h-1zM774.7,413.2h1v1h-1zM774.7,390.5h1v1h-1zM774.7,367.8h1v1h-1zM774.7,345.1h1v1h-1zM774.7,322.3h1v1h-1zM774.7,299.6h1v1h-1zM774.7,276.9h1v1h-1zM774.7,254.2h1v1h-1zM774.7,231.5h1v1h-1zM774.7,208.7h1v1h-1zM774.7,186.0h1v1h-1zM774.7,163.3h1v1h-1zM774.7,140.6h1v1h-1zM774.7,117.9h1v1h-1zM774.7,95.2h1v1h-1zM774.7,72.4h1v1h-1zM774.7,49.7h1v1h-1zM774.7,27.0h1v1h-1zM774.7,4.3h1v1h-1zM797.4,572.2h1v1h-1zM797.4,549.5h1v1h-1zM797.4,526.8h1v1h-1zM797.4,504.1h1v1h-1zM797.4,481.4h1v1h-1zM797.4,458.6h1v1h-1zM797.4,435.9h1v1h-1zM797.4,413.2h1v1h-1zM797.4,390.5h1v1h-1zM797.4,367.8h1v1h-1zM797.4,345.1h1v1h-1zM797.4,322.3h1v1h-1zM797.4,299.6h1v1h-1zM797.4,276.9h1v1h-1zM797.4,254.2h1v1h-1zM797.4,231.5h1v1h-1zM797.4,208.7h1v1h-1zM797.4,186.0h1v1h-1zM797.4,163.3h1v1h-1zM797.4,140.6h1v1h-1zM797.4,117.9h1v1h-1zM797.4,95.2h1v1h-1zM797.4,72.4h1v1h-1zM797.4,49.7h1v1h-1zM797.4,27.0h1v1h-1zM797.4,4.3h1v1h-1zM820.1,572.2h1v1h-1zM820.1,549.5h1v1h-1zM820.1,526.8h1v1h-1zM820.1,504.1h1v1h-1zM820.1,481.4h1v1h-1zM820.1,458.6h1v1h-1zM820.1,435.9h1v1h-1zM820.1,413.2h1v1h-1zM820.1,390.5h1v1h-1zM820.1,367.8h1v1h-1zM820.1,345.1h1v1h-1zM820.1,322.3h1v1h-1zM820.1,299.6h1v1h-1zM820.1,276.9h1v1h-1zM820.1,254.2h1v1h-1zM820.1,231.5h1v1h-1zM820.1,208.7h1v1h-1zM820.1,186.0h1v1h-1zM820.1,163.3h1v1h-1zM820.1,140.6h1v1h-1zM820.1,117.9h1v1h-1zM820.1,95.2h1v1h-1zM820.1,72.4h1v1h-1zM820.1,49.7h1v1h-1zM820.1,27.0h1v1h-1zM820.1,4.3h1v1h-1zM842.8,572.2h1v1h-1zM842.8,549.5h1v1h-1zM842.8,526.8h1v1h-1zM842.8,504.1h1v1h-1zM842.8,481.4h1v1h-1zM842.8,458.6h1v1h-1zM842.8,435.9h1v1h-1zM842.8,413.2h1v1h-1zM842.8,390.5h1v1h-1zM842.8,367.8h1v1h-1zM842.8,345.1h1v1h-1zM842.8,322.3h1v1h-1zM842.8,299.6h1v1h-1zM842.8,276.9h1v1h-1zM842.8,254.2h1v1h-1zM842.8,231.5h1v1h-1zM842.8,208.7h1v1h-1zM842.8,186.0h1v1h-1zM842.8,163.3h1v1h-1zM842.8,140.6h1v1h-1zM842.8,117.9h1v1h-1zM842.8,95.2h1v1h-1zM842.8,72.4h1v1h-1zM842.8,49.7h1v1h-1zM842.8,27.0h1v1h-1zM842.8,4.3h1v1h-1zM865.5,572.2h1v1h-1zM865.5,549.5h1v1h-1zM865.5,526.8h1v1h-1zM865.5,504.1h1v1h-1zM865.5,481.4h1v1h-1zM865.5,458.6h1v1h-1zM865.5,435.9h1v1h-1zM865.5,413.2h1v1h-1zM865.5,390.5h1v1h-1zM865.5,367.8h1v1h-1zM865.5,345.1h1v1h-1zM865.5,322.3h1v1h-1zM865.5,299.6h1v1h-1zM865.5,276.9h1v1h-1zM865.5,254.2h1v1h-1zM865.5,231.5h1v1h-1zM865.5,208.7h1v1h-1zM865.5,186.0h1v1h-1zM865.5,163.3h1v1h-1zM865.5,140.6h1v1h-1zM865.5,117.9h1v1h-1zM865.5,95.2h1v1h-1zM865.5,72.4h1v1h-1zM865.5,49.7h1v1h-1zM865.5,27.0h1v1h-1zM865.5,4.3h1v1h-1zM888.3,572.2h1v1h-1zM888.3,549.5h1v1h-1zM888.3,526.8h1v1h-1zM888.3,504.1h1v1h-1zM888.3,481.4h1v1h-1zM888.3,458.6h1v1h-1zM888.3,435.9h1v1h-1zM888.3,413.2h1v1h-1zM888.3,390.5h1v1h-1zM888.3,367.8h1v1h-1zM888.3,345.1h1v1h-1zM888.3,322.3h1v1h-1zM888.3,299.6h1v1h-1zM888.3,276.9h1v1h-1zM888.3,254.2h1v1h-1zM888.3,231.5h1v1h-1zM888.3,208.7h1v1h-1zM888.3,186.0h1v1h-1zM888.3,163.3h1v1h-1zM888.3,140.6h1v1h-1zM888.3,117.9h1v1h-1zM888.3,95.2h1v1h-1zM888.3,72.4h1v1h-1zM888.3,49.7h1v1h-1zM888.3,27.0h1v1h-1zM888.3,4.3h1v1h-1zM911.0,572.2h1v1h-1zM911.0,549.5h1v1h-1zM911.0,526.8h1v1h-1zM911.0,504.1h1v1h-1zM911.0,481.4h1v1h-1zM911.0,458.6h1v1h-1zM911.0,435.9h1v1h-1zM911.0,413.2h1v1h-1zM911.0,390.5h1v1h-1zM911.0,367.8h1v1h-1zM911.0,345.1h1v1h-1zM911.0,322.3h1v1h-1zM911.0,299.6h1v1h-1zM911.0,276.9h1v1h-1zM911.0,254.2h1v1h-1zM911.0,231.5h1v1h-1zM911.0,208.7h1v1h-1zM911.0,186.0h1v1h-1zM911.0,163.3h1v1h-1zM911.0,140.6h1v1h-1zM911.0,117.9h1v1h-1zM911.0,95.2h1v1h-1zM911.0,72.4h1v1h-1zM911.0,49.7h1v1h-1zM911.0,27.0h1v1h-1zM911.0,4.3h1v1h-1zM933.7,572.2h1v1h-1zM933.7,549.5h1v1h-1zM933.7,526.8h1v1h-1zM933.7,504.1h1v1h-1zM933.7,481.4h1v1h-1zM933.7,458.6h1v1h-1zM933.7,435.9h1v1h-1zM933.7,413.2h1v1h-1zM933.7,390.5h1v1h-1zM933.7,367.8h1v1h-1zM933.7,345.1h1v1h-1zM933.7,322.3h1v1h-1zM933.7,299.6h1v1h-1zM933.7,276.9h1v1h-1zM933.7,254.2h1v1h-1zM933.7,231.5h1v1h-1zM933.7,208.7h1v1h-1zM933.7,186.0h1v1h-1zM933.7,163.3h1v1h-1zM933.7,140.6h1v1h-1zM933.7,117.9h1v1h-1zM933.7,95.2h1v1h-1zM933.7,72.4h1v1h-1zM933.7,49.7h1v1h-1zM933.7,27.0h1v1h-1zM933.7,4.3h1v1h-1zM956.4,572.2h1v1h-1zM956.4,549.5h1v1h-1zM956.4,526.8h1v1h-1zM956.4,504.1h1v1h-1zM956.4,481.4h1v1h-1zM956.4,458.6h1v1h-1zM956.4,435.9h1v1h-1zM956.4,413.2h1v1h-1zM956.4,390.5h1v1h-1zM956.4,367.8h1v1h-1zM956.4,345.1h1v1h-1zM956.4,322.3h1v1h-1zM956.4,299.6h1v1h-1zM956.4,276.9h1v1h-1zM956.4,254.2h1v1h-1zM956.4,231.5h1v1h-1zM956.4,208.7h1v1h-1zM956.4,186.0h1v1h-1zM956.4,163.3h1v1h-1zM956.4,140.6h1v1h-1zM956.4,117.9h1v1h-1zM956.4,95.2h1v1h-1zM956.4,72.4h1v1h-1zM956.4,49.7h1v1h-1zM956.4,27.0h1v1h-1zM956.4,4.3h1v1h-1zM979.1,572.2h1v1h-1zM979.1,549.5h1v1h-1zM979.1,526.8h1v1h-1zM979.1,504.1h1v1h-1zM979.1,481.4h1v1h-1zM979.1,458.6h1v1h-1zM979.1,435.9h1v1h-1zM979.1,413.2h1v1h-1zM979.1,390.5h1v1h-1zM979.1,367.8h1v1h-1zM979.1,345.1h1v1h-1zM979.1,322.3h1v1h-1zM979.1,299.6h1v1h-1zM979.1,276.9h1v1h-1zM979.1,254.2h1v1h-1zM979.1,231.5h1v1h-1zM979.1,208.7h1v1h-1zM979.1,186.0h1v1h-1zM979.1,163.3h1v1h-1zM979.1,140.6h1v1h-1zM979.1,117.9h1v1h-1zM979.1,95.2h1v1h-1zM979.1,72.4h1v1h-1zM979.1,49.7h1v1h-1zM979.1,27.0h1v1h-1zM979.1,4.3h1v1h-1zM1001.8,572.2h1v1h-1zM1001.8,549.5h1v1h-1zM1001.8,526.8h1v1h-1zM1001.8,504.1h1v1h-1zM1001.8,481.4h1v1h-1zM1001.8,458.6h1v1h-1zM1001.8,435.9h1v1h-1zM1001.8,413.2h1v1h-1zM1001.8,390.5h1v1h-1zM1001.8,367.8h1v1h-1zM1001.8,345.1h1v1h-1zM1001.8,322.3h1v1h-1zM1001.8,299.6h1v1h-1zM1001.8,276.9h1v1h-1zM1001.8,254.2h1v1h-1zM1001.8,231.5h1v1h-1zM1001.8,208.7h1v1h-1zM1001.8,186.0h1v1h-1zM1001.8,163.3h1v1h-1zM1001.8,140.6h1v1h-1zM1001.8,117.9h1v1h-1zM1001.8,95.2h1v1h-1zM1001.8,72.4h1v1h-1zM1001.8,49.7h1v1h-1zM1001.8,27.0h1v1h-1zM1001.8,4.3h1v1h-1zM1024.6,572.2h1v1h-1zM1024.6,549.5h1v1h-1zM1024.6,526.8h1v1h-1zM1024.6,504.1h1v1h-1zM1024.6,481.4h1v1h-1zM1024.6,458.6h1v1h-1zM1024.6,435.9h1v1h-1zM1024.6,413.2h1v1h-1zM1024.6,390.5h1v1h-1zM1024.6,367.8h1v1h-1zM1024.6,345.1h1v1h-1zM1024.6,322.3h1v1h-1zM1024.6,299.6h1v1h-1zM1024.6,276.9h1v1h-1zM1024.6,254.2h1v1h-1zM1024.6,231.5h1v1h-1zM1024.6,208.7h1v1h-1zM1024.6,186.0h1v1h-1zM1024.6,163.3h1v1h-1zM1024.6,140.6h1v1h-1zM1024.6,117.9h1v1h-1zM1024.6,95.2h1v1h-1zM1024.6,72.4h1v1h-1zM1024.6,49.7h1v1h-1zM1024.6,27.0h1v1h-1zM1024.6,4.3h1v1h-1z" fill="#e6e6e6"/><rect x="860.5" y="59.69999999999999" width="8.3" height="476.5" fill="#7f7f7f"/><rect x="194" y="528" width="674.8" height="8.2" fill="#7f7f7f"/><rect x="185" y="50.400000000000006" width="673.8" height="477.4" fill="#fff" stroke="#c4c4c4" stroke-width="1"/><path d="M184.5,0V577M411.7,0V577M638.9,0V577M866.0,0V577M0,527.3H1044M0,300.1H1044M0,72.9H1044" stroke="#c8c8c8" stroke-opacity="0.18" stroke-width="1" fill="none"/></g></svg></div><div class="a" style="left:95px;top:155px;width:1044px;height:577px;overflow:hidden"><svg class="a" style="left:0px;top:0px" width="1044" height="577" viewBox="0 0 1044 577" ><rect x="207.5" y="73" width="629.0" height="431.20000000000005" fill="none" stroke="#8c8cf8" stroke-width="2.8"/><rect x="207.5" y="73" width="629.0" height="431.20000000000005" fill="none" stroke="#3a3a7c" stroke-width="1.3"/><rect x="210.5" y="77.5" width="221.0" height="308.5" fill="none" stroke="#c040c8" stroke-width="1.2" stroke-dasharray="6,2,1,2"/><path d="M309.80,125.00 L309.80,149.60 L283.30,171.00 L280.80,168.00 L262.80,181.80 L265.70,185.60 L233.90,211.50 L253.70,330.30 L255.60,331.70 L290.30,331.70 L290.30,336.30 L256.30,336.30 L254.60,337.80 L255.70,346.00 L257.50,347.40 L391.30,347.40 L393.10,346.00 L394.20,337.80 L392.50,336.30 L358.50,336.30 L358.50,331.70 L393.20,331.70 L395.10,330.30 L414.90,211.50 L383.10,185.60 L386.00,181.80 L368.00,168.00 L365.50,171.00 L339.00,149.60 L339.00,125.00" fill="none" stroke="#7a7a7a" stroke-width="0.95"/><path d="M309.80,125.00 A14.6,14.6 0 0 1 339.00,125.00" fill="none" stroke="#7a7a7a" stroke-width="0.95"/><circle cx="324.4" cy="124.5" r="3.8" fill="none" stroke="#6e6e6e" stroke-width="0.9"/><path d="M324.40,86.70 L324.40,370.50" stroke="#b82030" stroke-width="1.1" stroke-dasharray="11,4.3,1,4.3" stroke-dashoffset="8.5"/><path d="M301.00,124.50 L348.00,124.50" stroke="#b82030" stroke-width="1.1" stroke-dasharray="11,4.3,1,4.3" stroke-dashoffset="2.7"/><path d="M278.70,229.30 L370.50,229.30" stroke="#b82030" stroke-width="1.1" stroke-dasharray="11,4.3,1,4.3" stroke-dashoffset="1.3"/><path d="M292.39,231.23 A32,32 0 1 1 349.45,249.24" fill="none" stroke="#7a7a7a" stroke-width="0.95"/><path d="M293.34,235.02 A32,32 0 0 0 333.82,260.14" fill="none" stroke="#7a7a7a" stroke-width="0.95"/><path d="M292.39,231.23 L319.60,243.55 L321.02,244.03 M293.34,235.02 L333.82,260.14" fill="none" stroke="#7a7a7a" stroke-width="0.95"/><path d="M324.34,217.96 L324.34,211.80 L328.60,208.96 L323.39,208.01 C321.02,205.64 313.44,205.17 310.12,209.91 C307.75,213.70 308.70,218.44 307.56,223.18 C306.33,229.81 308.70,237.39 320.07,243.55 M324.34,217.96 C330.50,221.28 334.29,226.02 338.08,233.60 C341.87,241.18 345.66,244.98 349.45,249.24" fill="none" stroke="#7a7a7a" stroke-width="0.95"/><path d="M327.65,245.92 C329.55,245.45 331.45,243.55 333.34,244.03 L341.87,246.87 L347.56,251.14 L339.50,257.77 L327.65,250.66 Z M321.49,245.92 L323.86,248.77 L323.67,244.50 Z" fill="none" stroke="#7a7a7a" stroke-width="0.95"/><circle cx="321" cy="231.3" r="4.9" fill="none" stroke="#e83838" stroke-width="0.9"/><path d="M316.00,230.50 L326.00,230.50 M316.00,233.50 L326.00,233.50 M319.80,226.50 L319.80,236.00 M322.20,226.50 L322.20,236.00" stroke="#f07070" stroke-width="0.6"/><path d="M164.20,527.30 L205.10,527.30" stroke="#e08080" stroke-width="1.2"/><path d="M184.50,506.70 L184.50,547.20" stroke="#e05858" stroke-width="1.2"/><path d="M450.60,422.30 L836.50,422.30 M450.60,436.10 L836.50,436.10 M450.60,458.30 L836.50,458.30 M620.70,481.20 L836.50,481.20 M450.60,422.30 L450.60,504.00 M484.30,422.30 L484.30,436.10 M523.40,422.30 L523.40,458.30 M579.40,436.10 L579.40,458.30 M666.70,436.10 L666.70,458.30 M723.00,422.30 L723.00,458.30 M791.30,436.10 L791.30,458.30 M620.70,458.30 L620.70,504.00 M757.00,481.20 L757.00,504.00 M791.30,481.20 L791.30,504.00 " stroke="#333" stroke-width="1" fill="none"/></svg></div><div class="a t" style="left:549px;top:582.34px;font-size:5.5px;color:#000;-webkit-text-stroke:0.25px #000">Item ref</div><div class="a t" style="left:583px;top:582.34px;font-size:5.5px;color:#000;-webkit-text-stroke:0.25px #000">Quantity</div><div class="a t" style="left:622px;top:582.34px;font-size:5.5px;color:#000;-webkit-text-stroke:0.25px #000">Title/Name, destination, material, dimension etc</div><div class="a t" style="left:822px;top:582.34px;font-size:5.5px;color:#000;-webkit-text-stroke:0.25px #000">Article No./Reference</div><div class="a t" style="left:549px;top:594.94px;font-size:5.5px;color:#000;-webkit-text-stroke:0.25px #000">Designed by</div><div class="a t" style="left:622px;top:594.94px;font-size:5.5px;color:#000;-webkit-text-stroke:0.25px #000">Checked by</div><div class="a t" style="left:689px;top:594.94px;font-size:5.5px;color:#000;-webkit-text-stroke:0.25px #000">Approved by - date</div><div class="a t" style="left:768px;top:594.84px;font-size:5.5px;color:#000;-webkit-text-stroke:0.25px #000">Filename</div><div class="a t" style="left:822px;top:594.84px;font-size:5.5px;color:#000;-webkit-text-stroke:0.25px #000">Date</div><div class="a t" style="left:890px;top:594.84px;font-size:5.5px;color:#000;-webkit-text-stroke:0.25px #000">Scale</div><div class="a t" style="left:792.5px;top:604.09px;font-size:5.8px;color:#000;-webkit-text-stroke:0.25px #000">file.dxf</div><div class="a t" style="left:832px;top:601.53px;font-size:10px;color:#000;-webkit-text-stroke:0.2px #000">01/01/2025</div><div class="a t" style="left:911px;top:601.96px;font-size:9.5px;color:#000;-webkit-text-stroke:0.2px #000">1:1</div><div class="a t" style="left:723px;top:619.30px;font-size:15px;color:#000;-webkit-text-stroke:0.2px #000">Title</div><div class="a t" style="left:856px;top:640.34px;font-size:5.5px;color:#000;-webkit-text-stroke:0.25px #000">Edition</div><div class="a t" style="left:892px;top:640.34px;font-size:5.5px;color:#000;-webkit-text-stroke:0.25px #000">Sheet</div><div class="a t" style="left:912px;top:646.96px;font-size:9.5px;color:#000;-webkit-text-stroke:0.2px #000">1/1</div><svg class="a" style="left:485px;top:229px" width="90" height="90" viewBox="0 0 90 90" ><defs><radialGradient id="ring"><stop offset="0.78" stop-color="#a8bccc" stop-opacity="0"/><stop offset="0.86" stop-color="#a8bccc" stop-opacity="0.45"/><stop offset="0.95" stop-color="#9cb2c6" stop-opacity="0.9"/><stop offset="1" stop-color="#9cb2c6" stop-opacity="0"/></radialGradient></defs><circle cx="44" cy="44" r="41" fill="url(#ring)"/></svg><svg class="a" style="left:528px;top:272px" width="18" height="30" viewBox="0 0 18 30" ><path d="M1.2,1.4 L1.2,22.3 L6.6,17.5 L10.4,26.6 L14.2,25 L10.6,16.8 L16.4,16.4 Z" fill="#fff" stroke="#000" stroke-width="1.2" stroke-linejoin="miter"/></svg><div class="a" style="left:1139px;top:155px;width:14px;height:577px;background:#f9f9f9;border-left:1px solid #eaeaea"></div><div class="a" style="left:1143px;top:310px;width:8px;height:266px;background:#7f7f7f;border-radius:4px"></div><div class="a" style="left:1153.5px;top:108px;width:1.5px;height:690px;background:#ececec"></div><div class="a" style="left:95px;top:732px;width:988px;height:15px;background:#f9f9f9;border-top:1px solid #eaeaea"></div><div class="a" style="left:231px;top:736px;width:717px;height:8px;background:#7f7f7f;border-radius:4px"></div><div class="a" style="left:72px;top:732px;width:23px;height:15px;background:#ececec"></div><div class="a" style="left:1083px;top:732px;width:70px;height:15px;background:#ececec"></div><div class="a t" style="left:1102.5px;top:734.00px;font-size:13px;color:#111;">10 &lt; 100</div><div class="a" style="left:72px;top:747px;width:1081px;height:2px;background:#c9c9c9"></div><div class="a" style="left:72px;top:749px;width:1081px;height:22px;background:#fff;border-bottom:1.5px solid #c4c4c4"></div><div class="a" style="left:1139px;top:749px;width:14px;height:21px;background:#f8f8f8;border-left:1px solid #ececec"></div><div class="a" style="left:1142px;top:750px;width:8px;height:17px;background:#7f7f7f;border-radius:4px"></div><div class="a t" style="left:77px;top:752.00px;font-size:13px;color:#0c0ce0;"><i>Kommando:</i> layeradd</div><div class="a" style="left:72px;top:771px;width:1081px;height:27px;background:#ebebeb"></div><div class="a t" style="left:73px;top:778.50px;font-size:13px;color:#111;">Kommando:</div><div class="a" style="left:148px;top:776px;width:979px;height:18px;background:#fff"></div><div class="a" style="left:1127px;top:772px;width:26px;height:26px;background:linear-gradient(#f8f8f8,#e8e8e8);border:1px solid #b8b8b8"></div><svg class="a" style="left:1130px;top:776px" width="20" height="18" viewBox="0 0 20 18" ><rect x="3.5" y="4.5" width="13.5" height="9.5" fill="#fff" stroke="#444" stroke-width="0.9"/><rect x="3.5" y="4.2" width="13.5" height="2.6" fill="#111"/><circle cx="15" cy="5.5" r="0.6" fill="#ccc"/></svg><div class="a" style="left:0;top:798px;width:1500px;height:46px;background:#dcdcdc"></div><div class="a" style="left:0;top:798px;width:1155px;height:1px;background:#d0d0d0"></div><div class="a t" style="left:2px;top:807.53px;font-size:10px;color:#1a1a1a;letter-spacing:0.1px;-webkit-text-stroke:0.15px #1a1a1a">109.7579,180.0629</div><div class="a t" style="left:2px;top:827.53px;font-size:10px;color:#1a1a1a;letter-spacing:0.1px;-webkit-text-stroke:0.15px #1a1a1a">@49.7579,50.0629</div><div class="a" style="left:253px;top:800px;width:1px;height:41px;background:#9a9a9a"></div><div class="a t" style="left:256px;top:807.53px;font-size:10px;color:#1a1a1a;letter-spacing:0.1px;-webkit-text-stroke:0.15px #1a1a1a">210.8778&lt;59°</div><div class="a t" style="left:256px;top:827.53px;font-size:10px;color:#1a1a1a;letter-spacing:0.1px;-webkit-text-stroke:0.15px #1a1a1a">@70.5843&lt;45°</div><div class="a" style="left:506.5px;top:819px;width:6px;height:6px;border-radius:3px;background:#c4c4c4"></div><div class="a" style="left:940px;top:819px;width:6px;height:6px;border-radius:3px;background:#c4c4c4"></div><div class="a" style="left:1269px;top:819px;width:6px;height:6px;border-radius:3px;background:#c4c4c4"></div><div class="a t" style="left:549px;top:817.53px;font-size:10px;color:#1a1a1a;letter-spacing:0.1px;-webkit-text-stroke:0.15px #1a1a1a">Element oder Bereich selektieren</div><div class="a t" style="left:949px;top:817.53px;font-size:10px;color:#1a1a1a;letter-spacing:0.2px;-webkit-text-stroke:0.15px #1a1a1a">Keine Objekte selektiert.</div><svg class="a" style="left:715px;top:804px" width="22" height="33" viewBox="0 0 22 33" ><rect x="2.4" y="2.3" width="17.4" height="29.3" rx="8.7" fill="#fff" stroke="#555" stroke-width="0.9"/><path d="M2.4,16 Q11.1,13.3 19.8,16" fill="none" stroke="#3a3a3a" stroke-width="1.5"/><path d="M11.1,2.3 L11.1,4.6 M11.1,11.6 L11.1,14.6" stroke="#333" stroke-width="1.1"/><rect x="9.4" y="4.6" width="3.4" height="7" rx="1.4" fill="#fff" stroke="#333" stroke-width="0.9"/></svg><div class="a" style="left:1155px;top:107px;width:300px;height:691px;background:#fff"></div><div class="a" style="left:1155px;top:107px;width:1px;height:691px;background:#bdbdbd"></div><div class="a" style="left:1454px;top:107px;width:1px;height:691px;background:#c4c4c4"></div><div class="a" style="left:1156px;top:107px;width:298px;height:23px;background:linear-gradient(#ededed,#e4e4e4 70%,#d4d4d4)"></div><div class="a" style="left:1156px;top:129px;width:298px;height:1.5px;background:#bdbdbd"></div><svg class="a" style="left:1156px;top:109.5px" width="40" height="16" viewBox="0 0 40 16" ><circle cx="8" cy="8" r="7" fill="#6e6e6e"/><path d="M5.2,5.2 L10.8,10.8 M10.8,5.2 L5.2,10.8" stroke="#e8e8e8" stroke-width="1.8"/><circle cx="26" cy="8" r="7" fill="#6e6e6e"/><rect x="24.6" y="4.6" width="5" height="4" fill="none" stroke="#e8e8e8" stroke-width="1.1"/><rect x="22.4" y="7" width="5" height="4" fill="#6e6e6e" stroke="#e8e8e8" stroke-width="1.1"/></svg><div class="a t" style="left:1157px;top:112.5px;width:330px;text-align:center;font-size:12px;color:#333">Blockliste</div><div class="a" style="left:1155px;top:130px;width:300px;height:27px;background:#c2c2c2"></div><div class="a" style="left:1157.0px;top:131px;width:34.8px;height:24px;background:linear-gradient(#f8f8f8,#ececec 60%,#e2e2e2)"></div><svg class="a" style="left:1165.9px;top:136.0px" width="16" height="12" viewBox="0 0 16 12" ><path d="M0.6,6.3 C2.5,2 5.5,0.6 8.4,0.6 C11.3,0.6 14,2 15.6,5.8 C14.2,10 11.2,11.6 8.2,11.6 C5.2,11.6 2.2,10.3 0.6,6.3 Z" fill="#000"/><path d="M3.2,6.4 C4.5,4.4 6.2,3.4 8.4,3.4 C10.5,3.4 12.2,4.3 13.2,6.3 C12.2,8.7 10.4,9.7 8.2,9.7 C6,9.7 4.3,8.8 3.2,6.4 Z" fill="#fff"/><path d="M5.2,5.2 A3.1,3.1 0 0 0 11.4,5.2 L11.2,3.6 L5.5,3.6 Z" fill="#000"/><circle cx="7.2" cy="4.6" r="0.7" fill="#fff"/></svg><div class="a" style="left:1193.8px;top:131px;width:35.2px;height:24px;background:linear-gradient(#f8f8f8,#ececec 60%,#e2e2e2)"></div><svg class="a" style="left:1203.4px;top:136.0px" width="16" height="12" viewBox="0 0 16 12" ><path d="M0.6,6.3 C2.5,2 5.5,0.6 8.4,0.6 C11.3,0.6 14,2 15.6,5.8 C14.2,10 11.2,11.6 8.2,11.6 C5.2,11.6 2.2,10.3 0.6,6.3 Z" fill="#a8a8a8"/><path d="M3.2,6.4 C4.5,4.4 6.2,3.4 8.4,3.4 C10.5,3.4 12.2,4.3 13.2,6.3 C12.2,8.7 10.4,9.7 8.2,9.7 C6,9.7 4.3,8.8 3.2,6.4 Z" fill="#fff"/><path d="M5.2,5.2 A3.1,3.1 0 0 0 11.4,5.2 L11.2,3.6 L5.5,3.6 Z" fill="#a8a8a8"/><circle cx="7.2" cy="4.6" r="0.7" fill="#fff"/></svg><div class="a" style="left:1231.0px;top:131px;width:36.2px;height:24px;background:linear-gradient(#f8f8f8,#ececec 60%,#e2e2e2)"></div><svg class="a" style="left:1241.1px;top:134.5px" width="16" height="16" viewBox="0 0 16 16" ><path d="M8,1.5 L8,14.5 M1.5,8 L14.5,8" stroke="#e00000" stroke-width="3.2"/></svg><div class="a" style="left:1269.2px;top:131px;width:34.8px;height:24px;background:linear-gradient(#f8f8f8,#ececec 60%,#e2e2e2)"></div><svg class="a" style="left:1278.6px;top:134.5px" width="16" height="16" viewBox="0 0 16 16" ><path d="M1.5,8 L14.5,8" stroke="#e00000" stroke-width="3.2"/></svg><div class="a" style="left:1306.0px;top:131px;width:35.8px;height:24px;background:linear-gradient(#f8f8f8,#ececec 60%,#e2e2e2)"></div><div class="a t" style="left:1315.4px;top:137.27px;font-size:11.5px;color:#111;">a<span style="font-size:13px;position:relative;top:0px">|</span>b</div><div class="a" style="left:1343.8px;top:131px;width:35.0px;height:24px;background:linear-gradient(#f8f8f8,#ececec 60%,#e2e2e2)"></div><svg class="a" style="left:1352.3px;top:133.5px" width="18" height="18" viewBox="0 0 18 18" ><path d="M3,14.5 L13.5,3.5 L15.8,5.6 L5.3,16.5 Z" fill="#eab03a" stroke="#a06a10" stroke-width="0.6"/><path d="M13.5,3.5 L15,2 L17.3,4.1 L15.8,5.6 Z" fill="#e03030"/><path d="M3,14.5 L1.8,17.5 L5.3,16.5 Z" fill="#f0d8a0" stroke="#704010" stroke-width="0.4"/></svg><div class="a" style="left:1380.8px;top:131px;width:36.2px;height:24px;background:linear-gradient(#f8f8f8,#ececec 60%,#e2e2e2)"></div><svg class="a" style="left:1390.9px;top:133.5px" width="16" height="18" viewBox="0 0 16 18" ><rect x="2" y="1.5" width="12" height="15" fill="#e4e4ec" stroke="#c8c8d0" stroke-width="0.6"/><path d="M5,4 C9,4 10,5 10,8 L10,13 M7.5,10.5 L10,13.5 L12.5,10.5" fill="none" stroke="#1a5aff" stroke-width="1.8"/></svg><div class="a" style="left:1419.0px;top:131px;width:34.8px;height:24px;background:linear-gradient(#f8f8f8,#ececec 60%,#e2e2e2)"></div><svg class="a" style="left:1428.4px;top:134.5px" width="16" height="16" viewBox="0 0 16 16" ><rect x="3" y="3" width="10" height="10" fill="#e88a5c" stroke="#d8402a" stroke-width="1"/><path d="M5.8,5.8 L10.2,10.2 M10.2,5.8 L5.8,10.2" stroke="#fff" stroke-width="1.5"/></svg><div class="a" style="left:1156px;top:197px;width:298px;height:20px;background:#d4d4d4"></div><svg class="a" style="left:1161px;top:161px" width="16" height="12" viewBox="0 0 16 12" ><path d="M0.6,6.3 C2.5,2 5.5,0.6 8.4,0.6 C11.3,0.6 14,2 15.6,5.8 C14.2,10 11.2,11.6 8.2,11.6 C5.2,11.6 2.2,10.3 0.6,6.3 Z" fill="#000"/><path d="M3.2,6.4 C4.5,4.4 6.2,3.4 8.4,3.4 C10.5,3.4 12.2,4.3 13.2,6.3 C12.2,8.7 10.4,9.7 8.2,9.7 C6,9.7 4.3,8.8 3.2,6.4 Z" fill="#fff"/><path d="M5.2,5.2 A3.1,3.1 0 0 0 11.4,5.2 L11.2,3.6 L5.5,3.6 Z" fill="#000"/><circle cx="7.2" cy="4.6" r="0.7" fill="#fff"/></svg><div class="a t" style="left:1205px;top:160.26px;font-size:13.4px;color:#111;">Model (*Model_Space)</div><svg class="a" style="left:1161px;top:181px" width="16" height="12" viewBox="0 0 16 12" ><path d="M0.6,6.3 C2.5,2 5.5,0.6 8.4,0.6 C11.3,0.6 14,2 15.6,5.8 C14.2,10 11.2,11.6 8.2,11.6 C5.2,11.6 2.2,10.3 0.6,6.3 Z" fill="#000"/><path d="M3.2,6.4 C4.5,4.4 6.2,3.4 8.4,3.4 C10.5,3.4 12.2,4.3 13.2,6.3 C12.2,8.7 10.4,9.7 8.2,9.7 C6,9.7 4.3,8.8 3.2,6.4 Z" fill="#fff"/><path d="M5.2,5.2 A3.1,3.1 0 0 0 11.4,5.2 L11.2,3.6 L5.5,3.6 Z" fill="#000"/><circle cx="7.2" cy="4.6" r="0.7" fill="#fff"/></svg><svg class="a" style="left:1183px;top:179px" width="16" height="16" viewBox="0 0 16 16" ><path d="M2,13.5 L11.5,3.5 L13.5,5.4 L4,15.4 Z" fill="#eab03a" stroke="#a06a10" stroke-width="0.5"/><path d="M11.5,3.5 L13,2 L15,3.9 L13.5,5.4 Z" fill="#e03030"/><path d="M2,13.5 L1.2,16 L4,15.4 Z" fill="#704010"/></svg><div class="a t" style="left:1205px;top:180.26px;font-size:13.4px;color:#111;">Layout1 (*Paper_Space)</div><svg class="a" style="left:1161px;top:201px" width="16" height="12" viewBox="0 0 16 12" ><path d="M0.6,6.3 C2.5,2 5.5,0.6 8.4,0.6 C11.3,0.6 14,2 15.6,5.8 C14.2,10 11.2,11.6 8.2,11.6 C5.2,11.6 2.2,10.3 0.6,6.3 Z" fill="#3a4a5e"/><path d="M3.2,6.4 C4.5,4.4 6.2,3.4 8.4,3.4 C10.5,3.4 12.2,4.3 13.2,6.3 C12.2,8.7 10.4,9.7 8.2,9.7 C6,9.7 4.3,8.8 3.2,6.4 Z" fill="#fff"/><path d="M5.2,5.2 A3.1,3.1 0 0 0 11.4,5.2 L11.2,3.6 L5.5,3.6 Z" fill="#3a4a5e"/><circle cx="7.2" cy="4.6" r="0.7" fill="#fff"/></svg><div class="a t" style="left:1205px;top:200.26px;font-size:13.4px;color:#111;">Rahmen</div><div class="a" style="left:1155px;top:322px;width:300px;height:1.5px;background:#b8b8b8"></div><div class="a" style="left:1156px;top:323px;width:298px;height:23px;background:linear-gradient(#ededed,#e4e4e4 70%,#d4d4d4)"></div><div class="a" style="left:1156px;top:345px;width:298px;height:1.5px;background:#bdbdbd"></div><svg class="a" style="left:1156px;top:325.5px" width="40" height="16" viewBox="0 0 40 16" ><circle cx="8" cy="8" r="7" fill="#6e6e6e"/><path d="M5.2,5.2 L10.8,10.8 M10.8,5.2 L5.2,10.8" stroke="#e8e8e8" stroke-width="1.8"/><circle cx="26" cy="8" r="7" fill="#6e6e6e"/><rect x="24.6" y="4.6" width="5" height="4" fill="none" stroke="#e8e8e8" stroke-width="1.1"/><rect x="22.4" y="7" width="5" height="4" fill="#6e6e6e" stroke="#e8e8e8" stroke-width="1.1"/></svg><div class="a t" style="left:1157px;top:328.5px;width:330px;text-align:center;font-size:12px;color:#333">Layerliste</div><div class="a" style="left:1155px;top:346px;width:300px;height:27px;background:#c2c2c2"></div><div class="a" style="left:1157.0px;top:347px;width:56.7px;height:24px;background:linear-gradient(#f8f8f8,#ececec 60%,#e2e2e2)"></div><svg class="a" style="left:1176.85px;top:352.0px" width="16" height="12" viewBox="0 0 16 12" ><path d="M0.6,6.3 C2.5,2 5.5,0.6 8.4,0.6 C11.3,0.6 14,2 15.6,5.8 C14.2,10 11.2,11.6 8.2,11.6 C5.2,11.6 2.2,10.3 0.6,6.3 Z" fill="#000"/><path d="M3.2,6.4 C4.5,4.4 6.2,3.4 8.4,3.4 C10.5,3.4 12.2,4.3 13.2,6.3 C12.2,8.7 10.4,9.7 8.2,9.7 C6,9.7 4.3,8.8 3.2,6.4 Z" fill="#fff"/><path d="M5.2,5.2 A3.1,3.1 0 0 0 11.4,5.2 L11.2,3.6 L5.5,3.6 Z" fill="#000"/><circle cx="7.2" cy="4.6" r="0.7" fill="#fff"/></svg><div class="a" style="left:1215.7px;top:347px;width:58.0px;height:24px;background:linear-gradient(#f8f8f8,#ececec 60%,#e2e2e2)"></div><svg class="a" style="left:1236.7px;top:352.0px" width="16" height="12" viewBox="0 0 16 12" ><path d="M0.6,6.3 C2.5,2 5.5,0.6 8.4,0.6 C11.3,0.6 14,2 15.6,5.8 C14.2,10 11.2,11.6 8.2,11.6 C5.2,11.6 2.2,10.3 0.6,6.3 Z" fill="#a8a8a8"/><path d="M3.2,6.4 C4.5,4.4 6.2,3.4 8.4,3.4 C10.5,3.4 12.2,4.3 13.2,6.3 C12.2,8.7 10.4,9.7 8.2,9.7 C6,9.7 4.3,8.8 3.2,6.4 Z" fill="#fff"/><path d="M5.2,5.2 A3.1,3.1 0 0 0 11.4,5.2 L11.2,3.6 L5.5,3.6 Z" fill="#a8a8a8"/><circle cx="7.2" cy="4.6" r="0.7" fill="#fff"/></svg><div class="a" style="left:1275.7px;top:347px;width:58.0px;height:24px;background:linear-gradient(#f8f8f8,#ececec 60%,#e2e2e2)"></div><svg class="a" style="left:1296.7px;top:350.5px" width="16" height="16" viewBox="0 0 16 16" ><path d="M8,1.5 L8,14.5 M1.5,8 L14.5,8" stroke="#e00000" stroke-width="3.2"/></svg><div class="a" style="left:1335.7px;top:347px;width:58.0px;height:24px;background:linear-gradient(#f8f8f8,#ececec 60%,#e2e2e2)"></div><svg class="a" style="left:1356.7px;top:350.5px" width="16" height="16" viewBox="0 0 16 16" ><path d="M1.5,8 L14.5,8" stroke="#e00000" stroke-width="3.2"/></svg><div class="a" style="left:1395.7px;top:347px;width:58.1px;height:24px;background:linear-gradient(#f8f8f8,#ececec 60%,#e2e2e2)"></div><svg class="a" style="left:1415.75px;top:349.5px" width="18" height="18" viewBox="0 0 18 18" ><path d="M3,14.5 L13.5,3.5 L15.8,5.6 L5.3,16.5 Z" fill="#eab03a" stroke="#a06a10" stroke-width="0.6"/><path d="M13.5,3.5 L15,2 L17.3,4.1 L15.8,5.6 Z" fill="#e03030"/><path d="M3,14.5 L1.8,17.5 L5.3,16.5 Z" fill="#f0d8a0" stroke="#704010" stroke-width="0.4"/></svg><div class="a" style="left:1156px;top:393px;width:298px;height:20px;background:#0848d8"></div><div class="a" style="left:1161px;top:378.5px;width:16px;height:9px;background:#000;border:1px solid #111"></div><div class="a t" style="left:1183px;top:376.26px;font-size:13.4px;color:#111;">0</div><svg class="a" style="left:1415px;top:377px" width="16" height="12" viewBox="0 0 16 12" ><path d="M0.6,6.3 C2.5,2 5.5,0.6 8.4,0.6 C11.3,0.6 14,2 15.6,5.8 C14.2,10 11.2,11.6 8.2,11.6 C5.2,11.6 2.2,10.3 0.6,6.3 Z" fill="#000"/><path d="M3.2,6.4 C4.5,4.4 6.2,3.4 8.4,3.4 C10.5,3.4 12.2,4.3 13.2,6.3 C12.2,8.7 10.4,9.7 8.2,9.7 C6,9.7 4.3,8.8 3.2,6.4 Z" fill="#fff"/><path d="M5.2,5.2 A3.1,3.1 0 0 0 11.4,5.2 L11.2,3.6 L5.5,3.6 Z" fill="#000"/><circle cx="7.2" cy="4.6" r="0.7" fill="#fff"/></svg><svg class="a" style="left:1439px;top:375px" width="12" height="16" viewBox="0 0 12 16" ><path d="M2.5,8 L2.5,5.5 C2.5,2.3 9.5,2.3 9.5,5.5 L9.5,8" fill="none" stroke="#bebebe" stroke-width="1.6"/><rect x="1" y="8" width="10" height="7" rx="0.8" fill="#bebebe"/></svg><div class="a" style="left:1161px;top:398.5px;width:16px;height:9px;background:#e040f0;border:1px solid #111"></div><div class="a t" style="left:1183px;top:396.26px;font-size:13.4px;color:#fff;">Ansichtsfenster</div><svg class="a" style="left:1415px;top:397px" width="16" height="12" viewBox="0 0 16 12" ><path d="M0.6,6.3 C2.5,2 5.5,0.6 8.4,0.6 C11.3,0.6 14,2 15.6,5.8 C14.2,10 11.2,11.6 8.2,11.6 C5.2,11.6 2.2,10.3 0.6,6.3 Z" fill="#33466e"/><path d="M3.2,6.4 C4.5,4.4 6.2,3.4 8.4,3.4 C10.5,3.4 12.2,4.3 13.2,6.3 C12.2,8.7 10.4,9.7 8.2,9.7 C6,9.7 4.3,8.8 3.2,6.4 Z" fill="#fff"/><path d="M5.2,5.2 A3.1,3.1 0 0 0 11.4,5.2 L11.2,3.6 L5.5,3.6 Z" fill="#33466e"/><circle cx="7.2" cy="4.6" r="0.7" fill="#fff"/></svg><svg class="a" style="left:1439px;top:395px" width="12" height="16" viewBox="0 0 12 16" ><path d="M2.5,8 L2.5,5.5 C2.5,2.3 9.5,2.3 9.5,5.5 L9.5,8" fill="none" stroke="#a9b9d9" stroke-width="1.6"/><rect x="1" y="8" width="10" height="7" rx="0.8" fill="#a9b9d9"/></svg><svg class="a" style="left:1393px;top:395px" width="16" height="16" viewBox="0 0 16 16" ><path d="M2,13.5 L11.5,3.5 L13.5,5.4 L4,15.4 Z" fill="#c9a060" stroke="#8a6a30" stroke-width="0.5"/><path d="M11.5,3.5 L13,2 L15,3.9 L13.5,5.4 Z" fill="#c07070"/><path d="M2,13.5 L1.2,16 L4,15.4 Z" fill="#604020"/></svg><div class="a" style="left:1161px;top:418.5px;width:16px;height:9px;background:#008080;border:1px solid #111"></div><div class="a t" style="left:1183px;top:416.26px;font-size:13.4px;color:#111;">Bemassungen</div><svg class="a" style="left:1415px;top:417px" width="16" height="12" viewBox="0 0 16 12" ><path d="M0.6,6.3 C2.5,2 5.5,0.6 8.4,0.6 C11.3,0.6 14,2 15.6,5.8 C14.2,10 11.2,11.6 8.2,11.6 C5.2,11.6 2.2,10.3 0.6,6.3 Z" fill="#000"/><path d="M3.2,6.4 C4.5,4.4 6.2,3.4 8.4,3.4 C10.5,3.4 12.2,4.3 13.2,6.3 C12.2,8.7 10.4,9.7 8.2,9.7 C6,9.7 4.3,8.8 3.2,6.4 Z" fill="#fff"/><path d="M5.2,5.2 A3.1,3.1 0 0 0 11.4,5.2 L11.2,3.6 L5.5,3.6 Z" fill="#000"/><circle cx="7.2" cy="4.6" r="0.7" fill="#fff"/></svg><svg class="a" style="left:1439px;top:415px" width="12" height="16" viewBox="0 0 12 16" ><path d="M2.5,8 L2.5,5.5 C2.5,2.3 9.5,2.3 9.5,5.5 L9.5,8" fill="none" stroke="#bebebe" stroke-width="1.6"/><rect x="1" y="8" width="10" height="7" rx="0.8" fill="#bebebe"/></svg><div class="a" style="left:1161px;top:438.5px;width:16px;height:9px;background:#fff;border:1px solid #111"></div><div class="a t" style="left:1183px;top:436.26px;font-size:13.4px;color:#111;">Defpoints</div><svg class="a" style="left:1415px;top:437px" width="16" height="12" viewBox="0 0 16 12" ><path d="M0.6,6.3 C2.5,2 5.5,0.6 8.4,0.6 C11.3,0.6 14,2 15.6,5.8 C14.2,10 11.2,11.6 8.2,11.6 C5.2,11.6 2.2,10.3 0.6,6.3 Z" fill="#000"/><path d="M3.2,6.4 C4.5,4.4 6.2,3.4 8.4,3.4 C10.5,3.4 12.2,4.3 13.2,6.3 C12.2,8.7 10.4,9.7 8.2,9.7 C6,9.7 4.3,8.8 3.2,6.4 Z" fill="#fff"/><path d="M5.2,5.2 A3.1,3.1 0 0 0 11.4,5.2 L11.2,3.6 L5.5,3.6 Z" fill="#000"/><circle cx="7.2" cy="4.6" r="0.7" fill="#fff"/></svg><svg class="a" style="left:1439px;top:435px" width="12" height="16" viewBox="0 0 12 16" ><path d="M2.5,8 L2.5,5.5 C2.5,2.3 9.5,2.3 9.5,5.5 L9.5,8" fill="none" stroke="#bebebe" stroke-width="1.6"/><rect x="1" y="8" width="10" height="7" rx="0.8" fill="#bebebe"/></svg><div class="a" style="left:1161px;top:458.5px;width:16px;height:9px;background:#000;border:1px solid #111"></div><div class="a t" style="left:1183px;top:456.26px;font-size:13.4px;color:#111;">Rahmen</div><svg class="a" style="left:1415px;top:457px" width="16" height="12" viewBox="0 0 16 12" ><path d="M0.6,6.3 C2.5,2 5.5,0.6 8.4,0.6 C11.3,0.6 14,2 15.6,5.8 C14.2,10 11.2,11.6 8.2,11.6 C5.2,11.6 2.2,10.3 0.6,6.3 Z" fill="#000"/><path d="M3.2,6.4 C4.5,4.4 6.2,3.4 8.4,3.4 C10.5,3.4 12.2,4.3 13.2,6.3 C12.2,8.7 10.4,9.7 8.2,9.7 C6,9.7 4.3,8.8 3.2,6.4 Z" fill="#fff"/><path d="M5.2,5.2 A3.1,3.1 0 0 0 11.4,5.2 L11.2,3.6 L5.5,3.6 Z" fill="#000"/><circle cx="7.2" cy="4.6" r="0.7" fill="#fff"/></svg><svg class="a" style="left:1439px;top:455px" width="12" height="16" viewBox="0 0 12 16" ><path d="M2.5,8 L2.5,5.5 C2.5,2.3 9.5,2.3 9.5,5.5 L9.5,8" fill="none" stroke="#bebebe" stroke-width="1.6"/><rect x="1" y="8" width="10" height="7" rx="0.8" fill="#bebebe"/></svg><div class="a" style="left:1161px;top:478.5px;width:16px;height:9px;background:#000;border:1px solid #111"></div><div class="a t" style="left:1183px;top:476.26px;font-size:13.4px;color:#111;">Sichtbar</div><svg class="a" style="left:1415px;top:477px" width="16" height="12" viewBox="0 0 16 12" ><path d="M0.6,6.3 C2.5,2 5.5,0.6 8.4,0.6 C11.3,0.6 14,2 15.6,5.8 C14.2,10 11.2,11.6 8.2,11.6 C5.2,11.6 2.2,10.3 0.6,6.3 Z" fill="#000"/><path d="M3.2,6.4 C4.5,4.4 6.2,3.4 8.4,3.4 C10.5,3.4 12.2,4.3 13.2,6.3 C12.2,8.7 10.4,9.7 8.2,9.7 C6,9.7 4.3,8.8 3.2,6.4 Z" fill="#fff"/><path d="M5.2,5.2 A3.1,3.1 0 0 0 11.4,5.2 L11.2,3.6 L5.5,3.6 Z" fill="#000"/><circle cx="7.2" cy="4.6" r="0.7" fill="#fff"/></svg><svg class="a" style="left:1439px;top:475px" width="12" height="16" viewBox="0 0 12 16" ><path d="M2.5,8 L2.5,5.5 C2.5,2.3 9.5,2.3 9.5,5.5 L9.5,8" fill="none" stroke="#bebebe" stroke-width="1.6"/><rect x="1" y="8" width="10" height="7" rx="0.8" fill="#bebebe"/></svg><div class="a" style="left:1161px;top:498.5px;width:16px;height:9px;background:#ff0000;border:1px solid #111"></div><div class="a t" style="left:1183px;top:496.26px;font-size:13.4px;color:#111;">Zentrum</div><svg class="a" style="left:1415px;top:497px" width="16" height="12" viewBox="0 0 16 12" ><path d="M0.6,6.3 C2.5,2 5.5,0.6 8.4,0.6 C11.3,0.6 14,2 15.6,5.8 C14.2,10 11.2,11.6 8.2,11.6 C5.2,11.6 2.2,10.3 0.6,6.3 Z" fill="#000"/><path d="M3.2,6.4 C4.5,4.4 6.2,3.4 8.4,3.4 C10.5,3.4 12.2,4.3 13.2,6.3 C12.2,8.7 10.4,9.7 8.2,9.7 C6,9.7 4.3,8.8 3.2,6.4 Z" fill="#fff"/><path d="M5.2,5.2 A3.1,3.1 0 0 0 11.4,5.2 L11.2,3.6 L5.5,3.6 Z" fill="#000"/><circle cx="7.2" cy="4.6" r="0.7" fill="#fff"/></svg><svg class="a" style="left:1439px;top:495px" width="12" height="16" viewBox="0 0 12 16" ><path d="M2.5,8 L2.5,5.5 C2.5,2.3 9.5,2.3 9.5,5.5 L9.5,8" fill="none" stroke="#bebebe" stroke-width="1.6"/><rect x="1" y="8" width="10" height="7" rx="0.8" fill="#bebebe"/></svg><div class="a" style="left:1455px;top:107px;width:45px;height:691px;background:linear-gradient(90deg,#d0d0d0 0,#f0f0f0 1px,#e9e9e9 3px,#cdcdcd 43px,#b4b4b4 45px)"></div><div class="a" style="left:1463px;top:116px;width:2px;height:2px;background:#a8a8a8"></div><div class="a" style="left:1469px;top:116px;width:2px;height:2px;background:#a8a8a8"></div><div class="a" style="left:1475px;top:116px;width:2px;height:2px;background:#a8a8a8"></div><div class="a" style="left:1481px;top:116px;width:2px;height:2px;background:#a8a8a8"></div><div class="a" style="left:1487px;top:116px;width:2px;height:2px;background:#a8a8a8"></div><div class="a" style="left:1458px;top:262px;width:40px;height:1px;background:repeating-linear-gradient(90deg,#888 0 1px,transparent 1px 3px)"></div><div class="a" style="left:1458px;top:410px;width:40px;height:1px;background:repeating-linear-gradient(90deg,#888 0 1px,transparent 1px 3px)"></div><div class="a" style="left:1457px;top:120px;width:41px;height:42px;background:#b9b9b9;border-radius:5px"></div><div class="a" style="left:1457px;top:167px;width:41px;height:42px;background:#b9b9b9;border-radius:5px"></div><div class="a" style="left:1457px;top:418px;width:41px;height:42px;background:#b9b9b9;border-radius:5px"></div><svg class="a" style="left:1462px;top:126px" width="30" height="30" viewBox="0 0 30 30" ><rect x="1.5" y="1.5" width="27" height="27" fill="#fff" stroke="#555" stroke-width="1"/><rect x="1.2" y="1.2" width="27.6" height="4.6" fill="#000"/><rect x="2.2" y="2" width="3.4" height="3.2" fill="#fff"/><path d="M8,12 L14,9 L14,22 L8,25 Z" fill="#ccc" stroke="#555" stroke-width="0.8"/><path d="M11,11 L17,8 L17,21 L11,24 Z" fill="#e8e8e8" stroke="#555" stroke-width="0.8"/><path d="M14,10 L22,7 L22,20 L14,23 Z" fill="#f4f4f4" stroke="#555" stroke-width="0.8"/><path d="M16,19 L20,12 L20,19 Z" fill="none" stroke="#e04040" stroke-width="0.8"/></svg><svg class="a" style="left:1462px;top:173px" width="30" height="30" viewBox="0 0 30 30" ><rect x="1.5" y="1.5" width="27" height="27" fill="#fff" stroke="#555" stroke-width="1"/><rect x="1.2" y="1.2" width="27.6" height="4.6" fill="#000"/><rect x="2.2" y="2" width="3.4" height="3.2" fill="#fff"/><rect x="7" y="11" width="11" height="9" fill="#f5efd0" stroke="#777" stroke-width="0.8"/><circle cx="17" cy="19" r="5" fill="#f5efd0" fill-opacity="0.8" stroke="#777" stroke-width="0.8"/></svg><svg class="a" style="left:1462px;top:220px" width="30" height="30" viewBox="0 0 30 30" ><rect x="1.5" y="1.5" width="27" height="27" fill="#fff" stroke="#555" stroke-width="1"/><rect x="1.2" y="1.2" width="27.6" height="4.6" fill="#000"/><rect x="2.2" y="2" width="3.4" height="3.2" fill="#fff"/><rect x="7" y="12" width="16" height="11" rx="2" fill="#f6f6f8" stroke="#b8c8e0" stroke-width="0.9"/></svg><svg class="a" style="left:1462px;top:276px" width="30" height="30" viewBox="0 0 30 30" ><rect x="1.5" y="1.5" width="27" height="27" fill="#fff" stroke="#555" stroke-width="1"/><rect x="1.2" y="1.2" width="27.6" height="4.6" fill="#000"/><rect x="2.2" y="2" width="3.4" height="3.2" fill="#fff"/><rect x="6" y="10" width="3" height="2.5" fill="#000"/><rect x="6" y="15.5" width="3" height="2.5" fill="#000"/><rect x="6" y="21" width="3" height="2.5" fill="#000"/><rect x="11" y="10" width="13" height="2.5" fill="none" stroke="#333" stroke-width="0.7"/><rect x="11" y="15.5" width="13" height="2.5" fill="none" stroke="#333" stroke-width="0.7"/><rect x="11" y="21" width="13" height="2.5" fill="none" stroke="#333" stroke-width="0.7"/></svg><svg class="a" style="left:1462px;top:322px" width="30" height="30" viewBox="0 0 30 30" ><rect x="1.5" y="1.5" width="27" height="27" fill="#fff" stroke="#555" stroke-width="1"/><rect x="1.2" y="1.2" width="27.6" height="4.6" fill="#000"/><rect x="2.2" y="2" width="3.4" height="3.2" fill="#fff"/><path d="M7,10 L23,10 L17,17 L17,24 L13,22 L13,17 Z" fill="#e0e0e0" stroke="#555" stroke-width="0.8"/></svg><svg class="a" style="left:1462px;top:367px" width="30" height="30" viewBox="0 0 30 30" ><rect x="1.5" y="1.5" width="27" height="27" fill="#fff" stroke="#555" stroke-width="1"/><rect x="1.2" y="1.2" width="27.6" height="4.6" fill="#000"/><rect x="2.2" y="2" width="3.4" height="3.2" fill="#fff"/><path d="M6,10 L11,13 L11,22 L6,25 Z" fill="#f4f4f4" stroke="#333" stroke-width="0.8"/><rect x="11" y="14" width="13" height="7" fill="#d8d8d8" stroke="#555" stroke-width="0.8"/><path d="M5,17.5 L26,17.5" stroke="#e06060" stroke-width="0.6" stroke-dasharray="1.5,1"/></svg><svg class="a" style="left:1462px;top:424px" width="30" height="30" viewBox="0 0 30 30" ><rect x="1.5" y="1.5" width="27" height="27" fill="#fff" stroke="#555" stroke-width="1"/><rect x="1.2" y="1.2" width="27.6" height="4.6" fill="#000"/><rect x="2.2" y="2" width="3.4" height="3.2" fill="#fff"/><path d="M5,10 L13,10 M5,13 L13,13 M5,16 L13,16 M5,19 L13,19" stroke="#888" stroke-width="0.6"/><rect x="1.5" y="24" width="27" height="4.5" fill="none" stroke="#111" stroke-width="0.8"/><path d="M9,26.2 L24,26.2" stroke="#555" stroke-width="0.8"/></svg><svg class="a" style="left:1462px;top:471px" width="30" height="30" viewBox="0 0 30 30" ><rect x="1.5" y="1.5" width="27" height="27" fill="#fff" stroke="#555" stroke-width="1"/><rect x="1.2" y="1.2" width="27.6" height="4.6" fill="#000"/><rect x="2.2" y="2" width="3.4" height="3.2" fill="#fff"/><rect x="8" y="10" width="14" height="16" rx="1" fill="#c8903a" stroke="#8a5a18" stroke-width="0.6"/><rect x="10" y="12" width="10" height="12" fill="#f4f4f4"/><rect x="11.5" y="8.5" width="7" height="3" fill="#999"/><path d="M11.5,15 L18.5,15 M11.5,17.5 L18.5,17.5 M11.5,20 L18.5,20" stroke="#ccc" stroke-width="0.6"/></svg></div></body></html>
